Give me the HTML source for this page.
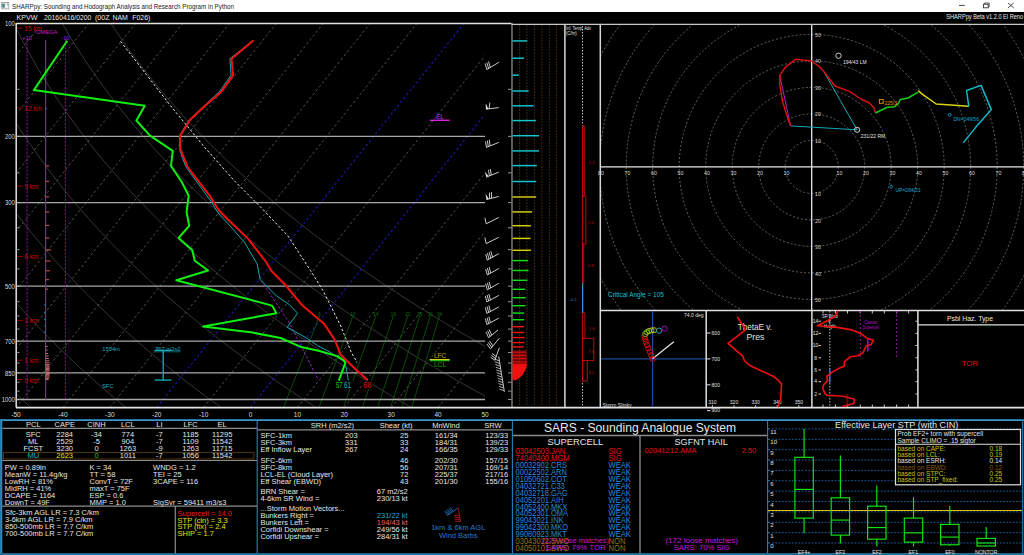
<!DOCTYPE html>
<html><head><meta charset="utf-8"><style>
html,body{margin:0;padding:0;background:#000;width:1024px;height:555px;overflow:hidden}
svg{display:block}
text{font-family:"Liberation Sans",sans-serif;white-space:pre}
</style></head><body>
<svg width="1024" height="555" viewBox="0 0 1024 555">
<rect x="0" y="0" width="1024" height="555" fill="#000"/>
<rect x="0.00" y="0.00" width="1024.00" height="12.00" fill="#ffffff"/>
<rect x="1.60" y="2.40" width="7.20" height="6.40" fill="#f4f4f4" stroke="#a8a8a8" stroke-width="0.9"/>
<line x1="1.60" y1="2.70" x2="8.80" y2="2.70" stroke="#a0a0a0" stroke-width="1.0"/>
<rect x="2.20" y="3.80" width="2.60" height="3.80" fill="#3a8a7a"/>
<rect x="7.00" y="3.80" width="1.20" height="1.50" fill="#80a8c8"/>
<text x="12.1" y="8.91" font-size="7.6" fill="#222" text-anchor="start" textLength="222.0" lengthAdjust="spacingAndGlyphs">SHARPpy: Sounding and Hodograph Analysis and Research Program in Python</text>
<line x1="959.00" y1="5.40" x2="964.80" y2="5.40" stroke="#333" stroke-width="0.9"/>
<rect x="983.40" y="4.20" width="4.80" height="3.60" fill="none" stroke="#333" stroke-width="0.9"/>
<line x1="984.60" y1="4.20" x2="984.60" y2="3.00" stroke="#333" stroke-width="0.8"/>
<line x1="984.60" y1="3.00" x2="989.20" y2="3.00" stroke="#333" stroke-width="0.8"/>
<line x1="989.20" y1="3.00" x2="989.20" y2="6.60" stroke="#333" stroke-width="0.8"/>
<line x1="989.20" y1="6.60" x2="988.20" y2="6.60" stroke="#333" stroke-width="0.8"/>
<line x1="1008.00" y1="3.00" x2="1013.60" y2="7.80" stroke="#333" stroke-width="0.9"/>
<line x1="1013.60" y1="3.00" x2="1008.00" y2="7.80" stroke="#333" stroke-width="0.9"/>
<text x="16.6" y="20.28" font-size="7.5" fill="#e8e8e8" text-anchor="start" textLength="20.9" lengthAdjust="spacingAndGlyphs">KPVW</text>
<text x="44.0" y="20.28" font-size="7.5" fill="#e8e8e8" text-anchor="start" textLength="47.3" lengthAdjust="spacingAndGlyphs">20160416/0200</text>
<text x="95.0" y="20.28" font-size="7.5" fill="#e8e8e8" text-anchor="start" textLength="14.6" lengthAdjust="spacingAndGlyphs">(00Z</text>
<text x="112.5" y="20.28" font-size="7.5" fill="#e8e8e8" text-anchor="start" textLength="15.4" lengthAdjust="spacingAndGlyphs">NAM</text>
<text x="132.3" y="20.28" font-size="7.5" fill="#e8e8e8" text-anchor="start" textLength="18.0" lengthAdjust="spacingAndGlyphs">F026)</text>
<text x="946.3" y="18.64" font-size="6.8" fill="#e8e8e8" text-anchor="start" textLength="76.8" lengthAdjust="spacingAndGlyphs">SHARPpy Beta v1.2.0 El Reno</text>
<defs><clipPath id="skc"><rect x="16.5" y="23.8" width="468.5" height="383.2"/></clipPath></defs>
<g clip-path="url(#skc)">
<polyline points="30.7,407.5 29.1,405.9 27.4,404.3 25.7,402.7 24.1,401.1 22.4,399.5 20.7,397.9 19.0,396.2 17.3,394.5 15.6,392.8 13.9,391.1 12.2,389.4 10.4,387.6 8.7,385.9 6.9,384.1 5.1,382.3 3.4,380.4 1.6,378.6 -0.2,376.7 -2.0,374.8 -3.8,372.9 -5.7,371.0 -7.5,369.0 -9.3,367.1 -11.2,365.0 -13.1,363.0 -14.9,361.0 -16.8,358.9 -18.7,356.8 -20.6,354.6 -22.5,352.5 -24.5,350.3 -26.4,348.0 -28.4,345.8 -30.4,343.5 -32.3,341.2 -34.3,338.8 -36.3,336.4 -38.4,334.0 -40.4,331.6 -42.4,329.1 -44.5,326.5 -46.6,324.0 -48.7,321.3 -50.8,318.7 -52.9,316.0 -55.0,313.2 -57.2,310.4 -59.3,307.6 -61.5,304.7 -63.7,301.7 -65.9,298.7 -68.2,295.7 -70.4,292.6 -72.7,289.4 -75.0,286.2 -77.3,282.9 -79.6,279.5 -81.9,276.0 -84.3,272.5 -86.6,268.9 -89.0,265.3 -91.4,261.5 -93.9,257.7 -96.3,253.7 -98.8,249.7 -101.3,245.5 -103.8,241.3 -106.3,236.9 -108.9,232.4 -111.5,227.8 -114.1,223.1 -116.7,218.2 -119.4,213.2 -122.0,208.0 -124.7,202.6 -127.4,197.1 -130.2,191.4 -132.9,185.4 -135.7,179.2 -138.5,172.8 -141.4,166.1 -144.2,159.2 -147.1,151.9 -150.0,144.3 -152.8,136.3 -155.8,128.0 -158.7,119.1 -161.6,109.8 -164.5,99.9 -167.4,89.3 -170.2,78.0 -173.0,65.9 -175.8,52.8 -178.4,38.6 -180.9,23.0" fill="none" stroke="#444444" stroke-width="0.8" stroke-linejoin="round"/>
<polyline points="125.8,407.5 123.9,405.9 122.0,404.3 120.1,402.7 118.1,401.1 116.2,399.5 114.2,397.9 112.3,396.2 110.3,394.5 108.3,392.8 106.3,391.1 104.3,389.4 102.3,387.6 100.3,385.9 98.2,384.1 96.2,382.3 94.1,380.4 92.0,378.6 89.9,376.7 87.8,374.8 85.7,372.9 83.6,371.0 81.5,369.0 79.3,367.1 77.1,365.0 75.0,363.0 72.8,361.0 70.6,358.9 68.3,356.8 66.1,354.6 63.8,352.5 61.6,350.3 59.3,348.0 57.0,345.8 54.7,343.5 52.4,341.2 50.0,338.8 47.7,336.4 45.3,334.0 42.9,331.6 40.5,329.1 38.1,326.5 35.6,324.0 33.1,321.3 30.7,318.7 28.2,316.0 25.6,313.2 23.1,310.4 20.5,307.6 17.9,304.7 15.3,301.7 12.7,298.7 10.1,295.7 7.4,292.6 4.7,289.4 2.0,286.2 -0.8,282.9 -3.5,279.5 -6.3,276.0 -9.1,272.5 -12.0,268.9 -14.8,265.3 -17.7,261.5 -20.7,257.7 -23.6,253.7 -26.6,249.7 -29.6,245.5 -32.7,241.3 -35.7,236.9 -38.8,232.4 -42.0,227.8 -45.2,223.1 -48.4,218.2 -51.6,213.2 -54.9,208.0 -58.2,202.6 -61.6,197.1 -65.0,191.4 -68.4,185.4 -71.9,179.2 -75.4,172.8 -79.0,166.1 -82.6,159.2 -86.2,151.9 -89.9,144.3 -93.6,136.3 -97.4,128.0 -101.2,119.1 -105.0,109.8 -108.9,99.9 -112.8,89.3 -116.7,78.0 -120.7,65.9 -124.6,52.8 -128.5,38.6 -132.3,23.0" fill="none" stroke="#444444" stroke-width="0.8" stroke-linejoin="round"/>
<polyline points="220.9,407.5 218.8,405.9 216.6,404.3 214.4,402.7 212.2,401.1 210.0,399.5 207.8,397.9 205.5,396.2 203.3,394.5 201.0,392.8 198.8,391.1 196.5,389.4 194.2,387.6 191.9,385.9 189.5,384.1 187.2,382.3 184.8,380.4 182.5,378.6 180.1,376.7 177.7,374.8 175.3,372.9 172.8,371.0 170.4,369.0 167.9,367.1 165.5,365.0 163.0,363.0 160.5,361.0 157.9,358.9 155.4,356.8 152.8,354.6 150.2,352.5 147.7,350.3 145.0,348.0 142.4,345.8 139.8,343.5 137.1,341.2 134.4,338.8 131.7,336.4 129.0,334.0 126.2,331.6 123.4,329.1 120.6,326.5 117.8,324.0 115.0,321.3 112.1,318.7 109.2,316.0 106.3,313.2 103.4,310.4 100.4,307.6 97.4,304.7 94.4,301.7 91.4,298.7 88.3,295.7 85.2,292.6 82.1,289.4 78.9,286.2 75.8,282.9 72.5,279.5 69.3,276.0 66.0,272.5 62.7,268.9 59.3,265.3 56.0,261.5 52.5,257.7 49.1,253.7 45.6,249.7 42.1,245.5 38.5,241.3 34.9,236.9 31.2,232.4 27.5,227.8 23.8,223.1 20.0,218.2 16.1,213.2 12.2,208.0 8.3,202.6 4.3,197.1 0.2,191.4 -3.9,185.4 -8.1,179.2 -12.3,172.8 -16.6,166.1 -20.9,159.2 -25.4,151.9 -29.8,144.3 -34.4,136.3 -39.0,128.0 -43.7,119.1 -48.5,109.8 -53.3,99.9 -58.3,89.3 -63.2,78.0 -68.3,65.9 -73.4,52.8 -78.6,38.6 -83.7,23.0" fill="none" stroke="#444444" stroke-width="0.8" stroke-linejoin="round"/>
<polyline points="316.1,407.5 313.6,405.9 311.2,404.3 308.7,402.7 306.3,401.1 303.8,399.5 301.3,397.9 298.8,396.2 296.3,394.5 293.7,392.8 291.2,391.1 288.6,389.4 286.0,387.6 283.4,385.9 280.8,384.1 278.2,382.3 275.6,380.4 272.9,378.6 270.2,376.7 267.5,374.8 264.8,372.9 262.1,371.0 259.3,369.0 256.6,367.1 253.8,365.0 251.0,363.0 248.1,361.0 245.3,358.9 242.4,356.8 239.6,354.6 236.6,352.5 233.7,350.3 230.8,348.0 227.8,345.8 224.8,343.5 221.8,341.2 218.8,338.8 215.7,336.4 212.6,334.0 209.5,331.6 206.4,329.1 203.2,326.5 200.0,324.0 196.8,321.3 193.6,318.7 190.3,316.0 187.0,313.2 183.7,310.4 180.3,307.6 176.9,304.7 173.5,301.7 170.0,298.7 166.5,295.7 163.0,292.6 159.5,289.4 155.9,286.2 152.3,282.9 148.6,279.5 144.9,276.0 141.1,272.5 137.4,268.9 133.5,265.3 129.7,261.5 125.8,257.7 121.8,253.7 117.8,249.7 113.7,245.5 109.6,241.3 105.5,236.9 101.3,232.4 97.0,227.8 92.7,223.1 88.3,218.2 83.8,213.2 79.3,208.0 74.8,202.6 70.1,197.1 65.4,191.4 60.6,185.4 55.8,179.2 50.8,172.8 45.8,166.1 40.7,159.2 35.5,151.9 30.2,144.3 24.8,136.3 19.3,128.0 13.7,119.1 8.0,109.8 2.2,99.9 -3.7,89.3 -9.8,78.0 -15.9,65.9 -22.2,52.8 -28.6,38.6 -35.1,23.0" fill="none" stroke="#444444" stroke-width="0.8" stroke-linejoin="round"/>
<polyline points="411.2,407.5 408.5,405.9 405.8,404.3 403.1,402.7 400.3,401.1 397.6,399.5 394.8,397.9 392.1,396.2 389.3,394.5 386.5,392.8 383.6,391.1 380.8,389.4 377.9,387.6 375.0,385.9 372.1,384.1 369.2,382.3 366.3,380.4 363.3,378.6 360.4,376.7 357.4,374.8 354.4,372.9 351.3,371.0 348.3,369.0 345.2,367.1 342.1,365.0 339.0,363.0 335.8,361.0 332.7,358.9 329.5,356.8 326.3,354.6 323.0,352.5 319.8,350.3 316.5,348.0 313.2,345.8 309.9,343.5 306.5,341.2 303.1,338.8 299.7,336.4 296.3,334.0 292.8,331.6 289.3,329.1 285.8,326.5 282.2,324.0 278.6,321.3 275.0,318.7 271.3,316.0 267.7,313.2 263.9,310.4 260.2,307.6 256.4,304.7 252.6,301.7 248.7,298.7 244.8,295.7 240.8,292.6 236.9,289.4 232.8,286.2 228.8,282.9 224.6,279.5 220.5,276.0 216.3,272.5 212.0,268.9 207.7,265.3 203.4,261.5 199.0,257.7 194.5,253.7 190.0,249.7 185.4,245.5 180.8,241.3 176.1,236.9 171.3,232.4 166.5,227.8 161.6,223.1 156.6,218.2 151.6,213.2 146.5,208.0 141.3,202.6 136.0,197.1 130.6,191.4 125.2,185.4 119.6,179.2 114.0,172.8 108.2,166.1 102.3,159.2 96.4,151.9 90.3,144.3 84.0,136.3 77.7,128.0 71.2,119.1 64.6,109.8 57.8,99.9 50.8,89.3 43.7,78.0 36.4,65.9 29.0,52.8 21.3,38.6 13.4,23.0" fill="none" stroke="#444444" stroke-width="0.8" stroke-linejoin="round"/>
<polyline points="506.3,407.5 503.3,405.9 500.4,404.3 497.4,402.7 494.4,401.1 491.4,399.5 488.4,397.9 485.3,396.2 482.3,394.5 479.2,392.8 476.1,391.1 472.9,389.4 469.8,387.6 466.6,385.9 463.4,384.1 460.2,382.3 457.0,380.4 453.8,378.6 450.5,376.7 447.2,374.8 443.9,372.9 440.6,371.0 437.2,369.0 433.8,367.1 430.4,365.0 427.0,363.0 423.5,361.0 420.0,358.9 416.5,356.8 413.0,354.6 409.4,352.5 405.9,350.3 402.2,348.0 398.6,345.8 394.9,343.5 391.2,341.2 387.5,338.8 383.7,336.4 379.9,334.0 376.1,331.6 372.2,329.1 368.3,326.5 364.4,324.0 360.4,321.3 356.4,318.7 352.4,316.0 348.3,313.2 344.2,310.4 340.1,307.6 335.9,304.7 331.6,301.7 327.4,298.7 323.0,295.7 318.7,292.6 314.2,289.4 309.8,286.2 305.3,282.9 300.7,279.5 296.1,276.0 291.4,272.5 286.7,268.9 281.9,265.3 277.1,261.5 272.2,257.7 267.2,253.7 262.2,249.7 257.1,245.5 251.9,241.3 246.7,236.9 241.4,232.4 236.0,227.8 230.5,223.1 225.0,218.2 219.3,213.2 213.6,208.0 207.8,202.6 201.8,197.1 195.8,191.4 189.7,185.4 183.4,179.2 177.1,172.8 170.6,166.1 164.0,159.2 157.2,151.9 150.3,144.3 143.3,136.3 136.1,128.0 128.7,119.1 121.1,109.8 113.4,99.9 105.4,89.3 97.2,78.0 88.8,65.9 80.1,52.8 71.2,38.6 62.0,23.0" fill="none" stroke="#444444" stroke-width="0.8" stroke-linejoin="round"/>
<polyline points="601.4,407.5 598.2,405.9 595.0,404.3 591.7,402.7 588.5,401.1 585.2,399.5 581.9,397.9 578.6,396.2 575.2,394.5 571.9,392.8 568.5,391.1 565.1,389.4 561.7,387.6 558.2,385.9 554.8,384.1 551.3,382.3 547.7,380.4 544.2,378.6 540.6,376.7 537.1,374.8 533.4,372.9 529.8,371.0 526.1,369.0 522.4,367.1 518.7,365.0 515.0,363.0 511.2,361.0 507.4,358.9 503.6,356.8 499.7,354.6 495.8,352.5 491.9,350.3 488.0,348.0 484.0,345.8 480.0,343.5 475.9,341.2 471.9,338.8 467.7,336.4 463.6,334.0 459.4,331.6 455.2,329.1 450.9,326.5 446.6,324.0 442.3,321.3 437.9,318.7 433.5,316.0 429.0,313.2 424.5,310.4 419.9,307.6 415.3,304.7 410.7,301.7 406.0,298.7 401.3,295.7 396.5,292.6 391.6,289.4 386.7,286.2 381.8,282.9 376.8,279.5 371.7,276.0 366.6,272.5 361.4,268.9 356.1,265.3 350.8,261.5 345.4,257.7 339.9,253.7 334.4,249.7 328.8,245.5 323.1,241.3 317.3,236.9 311.4,232.4 305.5,227.8 299.4,223.1 293.3,218.2 287.1,213.2 280.7,208.0 274.3,202.6 267.7,197.1 261.0,191.4 254.2,185.4 247.3,179.2 240.2,172.8 233.0,166.1 225.6,159.2 218.1,151.9 210.4,144.3 202.5,136.3 194.4,128.0 186.1,119.1 177.7,109.8 168.9,99.9 159.9,89.3 150.7,78.0 141.2,65.9 131.3,52.8 121.1,38.6 110.6,23.0" fill="none" stroke="#444444" stroke-width="0.8" stroke-linejoin="round"/>
<line x1="-499.90" y1="407.50" x2="-192.54" y2="23.30" stroke="#5a5a5a" stroke-width="0.9" stroke-dasharray="2.5,2.5"/>
<line x1="-453.00" y1="407.50" x2="-145.64" y2="23.30" stroke="#5a5a5a" stroke-width="0.9" stroke-dasharray="2.5,2.5"/>
<line x1="-406.10" y1="407.50" x2="-98.74" y2="23.30" stroke="#5a5a5a" stroke-width="0.9" stroke-dasharray="2.5,2.5"/>
<line x1="-359.20" y1="407.50" x2="-51.84" y2="23.30" stroke="#5a5a5a" stroke-width="0.9" stroke-dasharray="2.5,2.5"/>
<line x1="-312.30" y1="407.50" x2="-4.94" y2="23.30" stroke="#5a5a5a" stroke-width="0.9" stroke-dasharray="2.5,2.5"/>
<line x1="-265.40" y1="407.50" x2="41.96" y2="23.30" stroke="#5a5a5a" stroke-width="0.9" stroke-dasharray="2.5,2.5"/>
<line x1="-218.50" y1="407.50" x2="88.86" y2="23.30" stroke="#5a5a5a" stroke-width="0.9" stroke-dasharray="2.5,2.5"/>
<line x1="-171.60" y1="407.50" x2="135.76" y2="23.30" stroke="#5a5a5a" stroke-width="0.9" stroke-dasharray="2.5,2.5"/>
<line x1="-124.70" y1="407.50" x2="182.66" y2="23.30" stroke="#5a5a5a" stroke-width="0.9" stroke-dasharray="2.5,2.5"/>
<line x1="-77.80" y1="407.50" x2="229.56" y2="23.30" stroke="#5a5a5a" stroke-width="0.9" stroke-dasharray="2.5,2.5"/>
<line x1="-30.90" y1="407.50" x2="276.46" y2="23.30" stroke="#5a5a5a" stroke-width="0.9" stroke-dasharray="2.5,2.5"/>
<line x1="16.00" y1="407.50" x2="323.36" y2="23.30" stroke="#5a5a5a" stroke-width="0.9" stroke-dasharray="2.5,2.5"/>
<line x1="62.90" y1="407.50" x2="370.26" y2="23.30" stroke="#5a5a5a" stroke-width="0.9" stroke-dasharray="2.5,2.5"/>
<line x1="109.80" y1="407.50" x2="417.16" y2="23.30" stroke="#5a5a5a" stroke-width="0.9" stroke-dasharray="2.5,2.5"/>
<line x1="156.70" y1="407.50" x2="464.06" y2="23.30" stroke="#1818a8" stroke-width="1.15" stroke-dasharray="2.5,2.5"/>
<line x1="203.60" y1="407.50" x2="510.96" y2="23.30" stroke="#5a5a5a" stroke-width="0.9" stroke-dasharray="2.5,2.5"/>
<line x1="250.50" y1="407.50" x2="557.86" y2="23.30" stroke="#1818a8" stroke-width="1.15" stroke-dasharray="2.5,2.5"/>
<line x1="297.40" y1="407.50" x2="604.76" y2="23.30" stroke="#5a5a5a" stroke-width="0.9" stroke-dasharray="2.5,2.5"/>
<line x1="344.30" y1="407.50" x2="651.66" y2="23.30" stroke="#5a5a5a" stroke-width="0.9" stroke-dasharray="2.5,2.5"/>
<line x1="391.20" y1="407.50" x2="698.56" y2="23.30" stroke="#5a5a5a" stroke-width="0.9" stroke-dasharray="2.5,2.5"/>
<line x1="438.10" y1="407.50" x2="745.46" y2="23.30" stroke="#5a5a5a" stroke-width="0.9" stroke-dasharray="2.5,2.5"/>
<line x1="485.00" y1="407.50" x2="792.36" y2="23.30" stroke="#5a5a5a" stroke-width="0.9" stroke-dasharray="2.5,2.5"/>
<line x1="319.59" y1="315.97" x2="283.47" y2="407.48" stroke="#0a600a" stroke-width="0.8"/>
<text x="319.6" y="315.78" font-size="4.6" fill="#0a720a" text-anchor="middle">6</text>
<line x1="352.91" y1="315.97" x2="319.02" y2="407.48" stroke="#0a600a" stroke-width="0.8"/>
<text x="352.9" y="315.78" font-size="4.6" fill="#0a720a" text-anchor="middle">10</text>
<line x1="375.79" y1="315.97" x2="343.48" y2="407.48" stroke="#0a600a" stroke-width="0.8"/>
<text x="375.8" y="315.78" font-size="4.6" fill="#0a720a" text-anchor="middle">14</text>
<line x1="393.36" y1="315.97" x2="362.29" y2="407.48" stroke="#0a600a" stroke-width="0.8"/>
<text x="393.4" y="315.78" font-size="4.6" fill="#0a720a" text-anchor="middle">18</text>
<line x1="407.67" y1="315.97" x2="377.62" y2="407.48" stroke="#0a600a" stroke-width="0.8"/>
<text x="407.7" y="315.78" font-size="4.6" fill="#0a720a" text-anchor="middle">22</text>
<line x1="419.77" y1="315.97" x2="390.59" y2="407.48" stroke="#0a600a" stroke-width="0.8"/>
<text x="419.8" y="315.78" font-size="4.6" fill="#0a720a" text-anchor="middle">26</text>
<line x1="430.26" y1="315.97" x2="401.84" y2="407.48" stroke="#0a600a" stroke-width="0.8"/>
<text x="430.3" y="315.78" font-size="4.6" fill="#0a720a" text-anchor="middle">30</text>
<line x1="439.53" y1="315.97" x2="411.79" y2="407.48" stroke="#0a600a" stroke-width="0.8"/>
<text x="439.5" y="315.78" font-size="4.6" fill="#0a720a" text-anchor="middle">34</text>
<line x1="16.00" y1="136.34" x2="485.00" y2="136.34" stroke="#a8a8a8" stroke-width="1.3"/>
<line x1="16.00" y1="202.64" x2="485.00" y2="202.64" stroke="#a8a8a8" stroke-width="1.3"/>
<line x1="16.00" y1="286.16" x2="485.00" y2="286.16" stroke="#a8a8a8" stroke-width="1.3"/>
<line x1="16.00" y1="341.18" x2="485.00" y2="341.18" stroke="#a8a8a8" stroke-width="1.3"/>
<line x1="16.00" y1="372.93" x2="485.00" y2="372.93" stroke="#a8a8a8" stroke-width="1.3"/>
<line x1="16.00" y1="399.50" x2="485.00" y2="399.50" stroke="#a8a8a8" stroke-width="1.3"/>
</g>
<line x1="16.20" y1="23.50" x2="511.50" y2="23.50" stroke="#e4e4e4" stroke-width="1.5"/>
<line x1="16.20" y1="23.00" x2="16.20" y2="407.50" stroke="#e4e4e4" stroke-width="1.5"/>
<line x1="16.00" y1="89.30" x2="19.50" y2="89.30" stroke="#bbb" stroke-width="0.8"/>
<line x1="508.00" y1="89.30" x2="511.50" y2="89.30" stroke="#bbb" stroke-width="0.8"/>
<line x1="16.00" y1="136.34" x2="19.50" y2="136.34" stroke="#bbb" stroke-width="0.8"/>
<line x1="508.00" y1="136.34" x2="511.50" y2="136.34" stroke="#bbb" stroke-width="0.8"/>
<line x1="16.00" y1="172.82" x2="19.50" y2="172.82" stroke="#bbb" stroke-width="0.8"/>
<line x1="508.00" y1="172.82" x2="511.50" y2="172.82" stroke="#bbb" stroke-width="0.8"/>
<line x1="16.00" y1="202.64" x2="19.50" y2="202.64" stroke="#bbb" stroke-width="0.8"/>
<line x1="508.00" y1="202.64" x2="511.50" y2="202.64" stroke="#bbb" stroke-width="0.8"/>
<line x1="16.00" y1="227.84" x2="19.50" y2="227.84" stroke="#bbb" stroke-width="0.8"/>
<line x1="508.00" y1="227.84" x2="511.50" y2="227.84" stroke="#bbb" stroke-width="0.8"/>
<line x1="16.00" y1="249.68" x2="19.50" y2="249.68" stroke="#bbb" stroke-width="0.8"/>
<line x1="508.00" y1="249.68" x2="511.50" y2="249.68" stroke="#bbb" stroke-width="0.8"/>
<line x1="16.00" y1="268.93" x2="19.50" y2="268.93" stroke="#bbb" stroke-width="0.8"/>
<line x1="508.00" y1="268.93" x2="511.50" y2="268.93" stroke="#bbb" stroke-width="0.8"/>
<line x1="16.00" y1="286.16" x2="19.50" y2="286.16" stroke="#bbb" stroke-width="0.8"/>
<line x1="508.00" y1="286.16" x2="511.50" y2="286.16" stroke="#bbb" stroke-width="0.8"/>
<line x1="16.00" y1="301.75" x2="19.50" y2="301.75" stroke="#bbb" stroke-width="0.8"/>
<line x1="508.00" y1="301.75" x2="511.50" y2="301.75" stroke="#bbb" stroke-width="0.8"/>
<line x1="16.00" y1="315.97" x2="19.50" y2="315.97" stroke="#bbb" stroke-width="0.8"/>
<line x1="508.00" y1="315.97" x2="511.50" y2="315.97" stroke="#bbb" stroke-width="0.8"/>
<line x1="16.00" y1="329.06" x2="19.50" y2="329.06" stroke="#bbb" stroke-width="0.8"/>
<line x1="508.00" y1="329.06" x2="511.50" y2="329.06" stroke="#bbb" stroke-width="0.8"/>
<line x1="16.00" y1="341.18" x2="19.50" y2="341.18" stroke="#bbb" stroke-width="0.8"/>
<line x1="508.00" y1="341.18" x2="511.50" y2="341.18" stroke="#bbb" stroke-width="0.8"/>
<line x1="16.00" y1="352.46" x2="19.50" y2="352.46" stroke="#bbb" stroke-width="0.8"/>
<line x1="508.00" y1="352.46" x2="511.50" y2="352.46" stroke="#bbb" stroke-width="0.8"/>
<line x1="16.00" y1="363.01" x2="19.50" y2="363.01" stroke="#bbb" stroke-width="0.8"/>
<line x1="508.00" y1="363.01" x2="511.50" y2="363.01" stroke="#bbb" stroke-width="0.8"/>
<line x1="16.00" y1="372.93" x2="19.50" y2="372.93" stroke="#bbb" stroke-width="0.8"/>
<line x1="508.00" y1="372.93" x2="511.50" y2="372.93" stroke="#bbb" stroke-width="0.8"/>
<line x1="16.00" y1="382.27" x2="19.50" y2="382.27" stroke="#bbb" stroke-width="0.8"/>
<line x1="508.00" y1="382.27" x2="511.50" y2="382.27" stroke="#bbb" stroke-width="0.8"/>
<line x1="16.00" y1="391.11" x2="19.50" y2="391.11" stroke="#bbb" stroke-width="0.8"/>
<line x1="508.00" y1="391.11" x2="511.50" y2="391.11" stroke="#bbb" stroke-width="0.8"/>
<line x1="16.00" y1="399.50" x2="19.50" y2="399.50" stroke="#bbb" stroke-width="0.8"/>
<line x1="508.00" y1="399.50" x2="511.50" y2="399.50" stroke="#bbb" stroke-width="0.8"/>
<text x="14.9" y="25.71" font-size="7.0" fill="#dcdcdc" text-anchor="end" textLength="9.9" lengthAdjust="spacingAndGlyphs">100</text>
<text x="14.9" y="139.05" font-size="7.0" fill="#dcdcdc" text-anchor="end" textLength="9.9" lengthAdjust="spacingAndGlyphs">200</text>
<text x="14.9" y="205.34" font-size="7.0" fill="#dcdcdc" text-anchor="end" textLength="9.9" lengthAdjust="spacingAndGlyphs">300</text>
<text x="14.9" y="288.87" font-size="7.0" fill="#dcdcdc" text-anchor="end" textLength="9.9" lengthAdjust="spacingAndGlyphs">500</text>
<text x="14.9" y="343.89" font-size="7.0" fill="#dcdcdc" text-anchor="end" textLength="9.9" lengthAdjust="spacingAndGlyphs">700</text>
<text x="14.9" y="375.63" font-size="7.0" fill="#dcdcdc" text-anchor="end" textLength="9.9" lengthAdjust="spacingAndGlyphs">850</text>
<text x="14.9" y="402.21" font-size="7.0" fill="#dcdcdc" text-anchor="end" textLength="13.2" lengthAdjust="spacingAndGlyphs">1000</text>
<text x="16.0" y="416.77" font-size="6.6" fill="#dcdcdc" text-anchor="middle" textLength="9.4" lengthAdjust="spacingAndGlyphs">-50</text>
<text x="62.9" y="416.77" font-size="6.6" fill="#dcdcdc" text-anchor="middle" textLength="9.4" lengthAdjust="spacingAndGlyphs">-40</text>
<text x="109.8" y="416.77" font-size="6.6" fill="#dcdcdc" text-anchor="middle" textLength="9.4" lengthAdjust="spacingAndGlyphs">-30</text>
<text x="156.7" y="416.77" font-size="6.6" fill="#dcdcdc" text-anchor="middle" textLength="9.4" lengthAdjust="spacingAndGlyphs">-20</text>
<text x="203.6" y="416.77" font-size="6.6" fill="#dcdcdc" text-anchor="middle" textLength="9.4" lengthAdjust="spacingAndGlyphs">-10</text>
<text x="250.5" y="416.77" font-size="6.6" fill="#dcdcdc" text-anchor="middle" textLength="3.6" lengthAdjust="spacingAndGlyphs">0</text>
<text x="297.4" y="416.77" font-size="6.6" fill="#dcdcdc" text-anchor="middle" textLength="7.2" lengthAdjust="spacingAndGlyphs">10</text>
<text x="344.3" y="416.77" font-size="6.6" fill="#dcdcdc" text-anchor="middle" textLength="7.2" lengthAdjust="spacingAndGlyphs">20</text>
<text x="391.2" y="416.77" font-size="6.6" fill="#dcdcdc" text-anchor="middle" textLength="7.2" lengthAdjust="spacingAndGlyphs">30</text>
<text x="438.1" y="416.77" font-size="6.6" fill="#dcdcdc" text-anchor="middle" textLength="7.2" lengthAdjust="spacingAndGlyphs">40</text>
<text x="485.0" y="416.77" font-size="6.6" fill="#dcdcdc" text-anchor="middle" textLength="7.2" lengthAdjust="spacingAndGlyphs">50</text>
<line x1="17.00" y1="28.20" x2="22.50" y2="28.20" stroke="#c00000" stroke-width="0.8"/>
<text x="24.3" y="31.27" font-size="6.6" fill="#d00000" text-anchor="start">15 km</text>
<line x1="17.00" y1="108.00" x2="22.50" y2="108.00" stroke="#c00000" stroke-width="0.8"/>
<text x="24.3" y="111.07" font-size="6.6" fill="#d00000" text-anchor="start">12 km</text>
<line x1="17.00" y1="186.10" x2="22.50" y2="186.10" stroke="#c00000" stroke-width="0.8"/>
<text x="24.3" y="189.17" font-size="6.6" fill="#d00000" text-anchor="start">9 km</text>
<line x1="17.00" y1="256.40" x2="22.50" y2="256.40" stroke="#c00000" stroke-width="0.8"/>
<text x="24.3" y="259.47" font-size="6.6" fill="#d00000" text-anchor="start">6 km</text>
<line x1="17.00" y1="320.40" x2="22.50" y2="320.40" stroke="#c00000" stroke-width="0.8"/>
<text x="24.3" y="323.47" font-size="6.6" fill="#d00000" text-anchor="start">3 km</text>
<line x1="17.00" y1="360.20" x2="22.50" y2="360.20" stroke="#c00000" stroke-width="0.8"/>
<text x="24.3" y="363.27" font-size="6.6" fill="#d00000" text-anchor="start">1 km</text>
<line x1="17.00" y1="379.50" x2="22.50" y2="379.50" stroke="#c00000" stroke-width="0.8"/>
<text x="24.3" y="382.57" font-size="6.6" fill="#d00000" text-anchor="start">0 km</text>
<line x1="45.60" y1="40.00" x2="45.60" y2="399.50" stroke="#9a14b8" stroke-width="1.2"/>
<line x1="27.10" y1="40.00" x2="27.10" y2="399.50" stroke="#9a10b8" stroke-width="0.9" stroke-dasharray="2.2,1.4"/>
<line x1="65.40" y1="40.00" x2="65.40" y2="399.50" stroke="#9a10b8" stroke-width="0.9" stroke-dasharray="2.2,1.4"/>
<text x="27.0" y="39.80" font-size="5.8" fill="#c818c8" text-anchor="middle">+10</text>
<text x="65.4" y="39.80" font-size="5.8" fill="#c818c8" text-anchor="middle">-10</text>
<text x="46.6" y="34.40" font-size="5.8" fill="#c818c8" text-anchor="middle">OMEGA</text>
<line x1="45.60" y1="165.90" x2="49.20" y2="165.90" stroke="#e05050" stroke-width="1.0"/>
<line x1="45.60" y1="181.30" x2="49.20" y2="181.30" stroke="#e05050" stroke-width="1.0"/>
<line x1="45.60" y1="196.90" x2="49.20" y2="196.90" stroke="#e05050" stroke-width="1.0"/>
<line x1="45.60" y1="212.00" x2="49.20" y2="212.00" stroke="#e05050" stroke-width="1.0"/>
<line x1="45.60" y1="225.40" x2="49.20" y2="225.40" stroke="#e05050" stroke-width="1.0"/>
<line x1="45.60" y1="238.00" x2="49.20" y2="238.00" stroke="#e05050" stroke-width="1.0"/>
<line x1="45.60" y1="249.90" x2="51.10" y2="249.90" stroke="#e05050" stroke-width="1.0"/>
<line x1="45.60" y1="261.00" x2="50.60" y2="261.00" stroke="#e05050" stroke-width="1.0"/>
<line x1="45.60" y1="270.80" x2="50.10" y2="270.80" stroke="#e05050" stroke-width="1.0"/>
<line x1="45.60" y1="279.70" x2="49.10" y2="279.70" stroke="#e05050" stroke-width="1.0"/>
<line x1="45.60" y1="289.20" x2="48.10" y2="289.20" stroke="#e05050" stroke-width="1.0"/>
<line x1="45.60" y1="108.50" x2="47.00" y2="108.50" stroke="#2060e0" stroke-width="1.0"/>
<line x1="44.20" y1="304.90" x2="45.60" y2="304.90" stroke="#2a70e0" stroke-width="1.2"/>
<line x1="44.20" y1="312.40" x2="45.60" y2="312.40" stroke="#2a70e0" stroke-width="1.2"/>
<line x1="44.20" y1="319.70" x2="45.60" y2="319.70" stroke="#2a70e0" stroke-width="1.2"/>
<line x1="44.20" y1="326.00" x2="45.60" y2="326.00" stroke="#2a70e0" stroke-width="1.2"/>
<line x1="44.20" y1="332.20" x2="45.60" y2="332.20" stroke="#2a70e0" stroke-width="1.2"/>
<line x1="45.60" y1="346.50" x2="47.60" y2="346.50" stroke="#e07272" stroke-width="0.9"/>
<line x1="45.60" y1="350.00" x2="47.60" y2="350.00" stroke="#e07272" stroke-width="0.9"/>
<line x1="45.60" y1="353.50" x2="48.10" y2="353.50" stroke="#e07272" stroke-width="0.9"/>
<line x1="45.60" y1="356.00" x2="48.60" y2="356.00" stroke="#e07272" stroke-width="0.9"/>
<line x1="45.60" y1="358.50" x2="49.00" y2="358.50" stroke="#e07272" stroke-width="0.9"/>
<line x1="45.60" y1="360.80" x2="49.40" y2="360.80" stroke="#e07272" stroke-width="0.9"/>
<line x1="45.60" y1="362.80" x2="49.60" y2="362.80" stroke="#e07272" stroke-width="0.9"/>
<line x1="45.60" y1="364.60" x2="49.60" y2="364.60" stroke="#e07272" stroke-width="0.9"/>
<line x1="45.60" y1="365.85" x2="49.60" y2="365.85" stroke="#e07272" stroke-width="0.9"/>
<line x1="45.60" y1="367.10" x2="49.60" y2="367.10" stroke="#e07272" stroke-width="0.9"/>
<line x1="45.60" y1="368.35" x2="49.60" y2="368.35" stroke="#e07272" stroke-width="0.9"/>
<line x1="45.60" y1="369.60" x2="49.60" y2="369.60" stroke="#e07272" stroke-width="0.9"/>
<line x1="45.60" y1="370.85" x2="49.60" y2="370.85" stroke="#e07272" stroke-width="0.9"/>
<line x1="45.60" y1="372.10" x2="49.60" y2="372.10" stroke="#e07272" stroke-width="0.9"/>
<line x1="45.60" y1="373.35" x2="49.60" y2="373.35" stroke="#e07272" stroke-width="0.9"/>
<line x1="45.60" y1="374.60" x2="49.60" y2="374.60" stroke="#e07272" stroke-width="0.9"/>
<line x1="45.60" y1="375.85" x2="49.60" y2="375.85" stroke="#e07272" stroke-width="0.9"/>
<line x1="45.60" y1="377.10" x2="49.60" y2="377.10" stroke="#e07272" stroke-width="0.9"/>
<line x1="45.60" y1="378.35" x2="48.80" y2="378.35" stroke="#e07272" stroke-width="0.9"/>
<line x1="45.60" y1="379.60" x2="48.80" y2="379.60" stroke="#e07272" stroke-width="0.9"/>
<text x="111.1" y="350.60" font-size="5.8" fill="#10b0c0" text-anchor="middle">1504m</text>
<text x="167.8" y="350.60" font-size="5.8" fill="#10b0c0" text-anchor="middle" text-decoration="underline">267 m2s2</text>
<line x1="163.20" y1="350.40" x2="163.20" y2="380.10" stroke="#10b0c0" stroke-width="1.3"/>
<line x1="154.60" y1="350.40" x2="171.50" y2="350.40" stroke="#10b0c0" stroke-width="1.3"/>
<line x1="154.60" y1="380.10" x2="171.50" y2="380.10" stroke="#10b0c0" stroke-width="1.3"/>
<text x="107.8" y="387.60" font-size="5.8" fill="#10b0c0" text-anchor="middle">SFC</text>
<polyline points="120.6,41.4 170.5,105.7 204.6,147.3 234.9,181.3 261.3,207.8 288.0,236.0 310.4,270.4 323.0,290.6 331.9,308.3 340.7,326.0 345.8,338.6 350.8,351.2 357.1,362.6" fill="none" stroke="#e8e8e8" stroke-width="1.0" stroke-linejoin="round" stroke-dasharray="2.5,2"/>
<polyline points="261.3,280.8 289.4,322.9 318.5,380.2" fill="none" stroke="#9a20c0" stroke-width="1.0" stroke-linejoin="round" stroke-dasharray="2.6,1.8"/>
<polyline points="252.5,40.8 229.9,58.7 231.1,75.1 220.0,91.0 205.0,105.0 189.0,120.0 179.3,136.0 180.1,151.3 185.8,166.7 198.4,184.0 211.6,202.2 218.8,213.9 230.0,225.9 244.4,242.2 257.1,263.8 260.2,279.7 265.6,285.1 276.4,295.9 289.4,304.6 297.6,313.2 287.2,327.2 307.7,338.7 317.5,345.6 330.0,352.1 343.7,361.3 345.4,364.0 348.4,380.3" fill="none" stroke="#12a8b0" stroke-width="1.0" stroke-linejoin="round"/>
<polyline points="67.3,40.8 33.8,90.1 144.8,105.7 136.4,120.5 150.0,135.6 172.8,150.8 171.0,165.9 181.6,181.8 188.7,195.7 186.6,212.0 189.2,225.9 178.6,238.0 192.2,249.9 194.8,260.8 208.1,270.5 176.3,280.2 272.1,305.6 276.4,313.2 203.0,326.6 252.6,332.6 280.7,338.0 300.2,346.7 319.6,351.0 337.8,356.4 344.4,360.8 345.4,362.7 338.8,380.6" fill="none" stroke="#10f010" stroke-width="2.0" stroke-linejoin="round"/>
<polyline points="253.7,40.3 231.5,58.7 233.1,75.1 221.6,91.4 205.7,105.2 189.9,120.1 180.1,136.0 180.3,149.0 187.6,167.0 209.8,195.9 218.8,210.3 227.8,219.3 248.0,238.6 266.1,262.0 271.5,271.0 285.9,285.5 302.2,305.3 323.8,323.4 334.7,339.6 338.3,348.6 340.1,354.0 347.3,361.3 356.7,370.2 367.8,380.3" fill="none" stroke="#f01010" stroke-width="2.0" stroke-linejoin="round"/>
<rect x="333.50" y="381.00" width="21.50" height="8.00" fill="#000"/>
<rect x="362.50" y="381.00" width="10.00" height="8.00" fill="#000"/>
<text x="339.2" y="387.93" font-size="8.8" fill="#10d010" text-anchor="middle" textLength="6.6" lengthAdjust="spacingAndGlyphs">57</text>
<text x="347.6" y="387.93" font-size="8.8" fill="#10b8c0" text-anchor="middle" textLength="7.0" lengthAdjust="spacingAndGlyphs">61</text>
<text x="367.4" y="387.93" font-size="8.8" fill="#e81010" text-anchor="middle" textLength="7.8" lengthAdjust="spacingAndGlyphs">68</text>
<rect x="433.50" y="352.50" width="13.50" height="5.80" fill="#000"/>
<rect x="433.50" y="361.60" width="13.50" height="6.20" fill="#000"/>
<line x1="430.00" y1="359.60" x2="449.60" y2="359.60" stroke="#e8e010" stroke-width="1.1"/>
<line x1="430.00" y1="360.70" x2="449.60" y2="360.70" stroke="#20e010" stroke-width="1.1"/>
<text x="440.0" y="358.37" font-size="6.6" fill="#c8a810" text-anchor="middle" textLength="12.2" lengthAdjust="spacingAndGlyphs">LFC</text>
<text x="440.0" y="367.21" font-size="7.0" fill="#10b010" text-anchor="middle" textLength="12.2" lengthAdjust="spacingAndGlyphs">LCL</text>
<line x1="430.00" y1="120.30" x2="449.70" y2="120.30" stroke="#e020e0" stroke-width="1.4"/>
<text x="440.0" y="119.07" font-size="6.3" fill="#e020e0" text-anchor="middle">EL</text>
<line x1="498.80" y1="62.30" x2="486.90" y2="69.50" stroke="#e0e0e0" stroke-width="0.9"/>
<line x1="486.90" y1="69.50" x2="485.08" y2="63.59" stroke="#e0e0e0" stroke-width="0.9"/>
<line x1="488.61" y1="68.46" x2="486.79" y2="62.55" stroke="#e0e0e0" stroke-width="0.9"/>
<line x1="490.32" y1="67.43" x2="488.50" y2="61.52" stroke="#e0e0e0" stroke-width="0.9"/>
<line x1="498.80" y1="107.60" x2="485.90" y2="109.20" stroke="#e0e0e0" stroke-width="0.9"/>
<polygon points="485.9,109.2 485.7,103.2 488.4,108.9" fill="#e0e0e0"/>
<line x1="489.08" y1="108.81" x2="489.83" y2="102.67" stroke="#e0e0e0" stroke-width="0.9"/>
<line x1="498.80" y1="142.40" x2="486.40" y2="147.40" stroke="#e0e0e0" stroke-width="0.9"/>
<line x1="486.40" y1="147.40" x2="485.55" y2="141.27" stroke="#e0e0e0" stroke-width="0.9"/>
<line x1="488.25" y1="146.65" x2="487.40" y2="140.53" stroke="#e0e0e0" stroke-width="0.9"/>
<line x1="490.11" y1="145.90" x2="489.26" y2="139.78" stroke="#e0e0e0" stroke-width="0.9"/>
<line x1="498.80" y1="172.10" x2="486.40" y2="177.10" stroke="#e0e0e0" stroke-width="0.9"/>
<polygon points="486.4,177.1 484.6,171.5 488.7,176.2" fill="#e0e0e0"/>
<line x1="489.37" y1="175.90" x2="488.52" y2="169.78" stroke="#e0e0e0" stroke-width="0.9"/>
<line x1="491.22" y1="175.16" x2="490.37" y2="169.03" stroke="#e0e0e0" stroke-width="0.9"/>
<line x1="498.80" y1="196.50" x2="486.40" y2="199.50" stroke="#e0e0e0" stroke-width="0.9"/>
<polygon points="486.4,199.5 485.5,193.7 488.8,198.9" fill="#e0e0e0"/>
<line x1="489.51" y1="198.75" x2="489.56" y2="192.56" stroke="#e0e0e0" stroke-width="0.9"/>
<line x1="491.45" y1="198.28" x2="491.50" y2="192.09" stroke="#e0e0e0" stroke-width="0.9"/>
<line x1="498.80" y1="217.50" x2="486.20" y2="223.80" stroke="#e0e0e0" stroke-width="0.9"/>
<line x1="486.20" y1="223.80" x2="484.86" y2="217.76" stroke="#e0e0e0" stroke-width="0.9"/>
<line x1="498.80" y1="237.30" x2="486.20" y2="243.60" stroke="#e0e0e0" stroke-width="0.9"/>
<line x1="486.20" y1="243.60" x2="484.86" y2="237.56" stroke="#e0e0e0" stroke-width="0.9"/>
<line x1="498.80" y1="253.60" x2="487.30" y2="260.10" stroke="#e0e0e0" stroke-width="0.9"/>
<line x1="487.30" y1="260.10" x2="485.65" y2="254.14" stroke="#e0e0e0" stroke-width="0.9"/>
<line x1="489.04" y1="259.12" x2="487.39" y2="253.15" stroke="#e0e0e0" stroke-width="0.9"/>
<line x1="490.78" y1="258.13" x2="489.14" y2="252.17" stroke="#e0e0e0" stroke-width="0.9"/>
<line x1="492.52" y1="257.15" x2="490.88" y2="251.19" stroke="#e0e0e0" stroke-width="0.9"/>
<line x1="498.80" y1="268.50" x2="487.30" y2="275.00" stroke="#e0e0e0" stroke-width="0.9"/>
<line x1="487.30" y1="275.00" x2="485.65" y2="269.04" stroke="#e0e0e0" stroke-width="0.9"/>
<line x1="489.04" y1="274.02" x2="487.39" y2="268.05" stroke="#e0e0e0" stroke-width="0.9"/>
<line x1="490.78" y1="273.03" x2="489.14" y2="267.07" stroke="#e0e0e0" stroke-width="0.9"/>
<line x1="498.80" y1="283.30" x2="487.30" y2="289.80" stroke="#e0e0e0" stroke-width="0.9"/>
<line x1="487.30" y1="289.80" x2="485.65" y2="283.84" stroke="#e0e0e0" stroke-width="0.9"/>
<line x1="489.04" y1="288.82" x2="487.39" y2="282.85" stroke="#e0e0e0" stroke-width="0.9"/>
<line x1="490.78" y1="287.83" x2="489.14" y2="281.87" stroke="#e0e0e0" stroke-width="0.9"/>
<line x1="498.80" y1="295.40" x2="486.90" y2="301.90" stroke="#e0e0e0" stroke-width="0.9"/>
<line x1="486.90" y1="301.90" x2="485.34" y2="295.92" stroke="#e0e0e0" stroke-width="0.9"/>
<line x1="488.66" y1="300.94" x2="487.10" y2="294.96" stroke="#e0e0e0" stroke-width="0.9"/>
<line x1="490.41" y1="299.98" x2="488.85" y2="294.00" stroke="#e0e0e0" stroke-width="0.9"/>
<line x1="498.80" y1="306.90" x2="486.90" y2="313.40" stroke="#e0e0e0" stroke-width="0.9"/>
<line x1="486.90" y1="313.40" x2="485.34" y2="307.42" stroke="#e0e0e0" stroke-width="0.9"/>
<line x1="488.66" y1="312.44" x2="487.10" y2="306.46" stroke="#e0e0e0" stroke-width="0.9"/>
<line x1="490.41" y1="311.48" x2="488.85" y2="305.50" stroke="#e0e0e0" stroke-width="0.9"/>
<line x1="498.80" y1="318.10" x2="486.90" y2="324.60" stroke="#e0e0e0" stroke-width="0.9"/>
<line x1="486.90" y1="324.60" x2="485.34" y2="318.62" stroke="#e0e0e0" stroke-width="0.9"/>
<line x1="488.66" y1="323.64" x2="487.10" y2="317.66" stroke="#e0e0e0" stroke-width="0.9"/>
<line x1="490.41" y1="322.68" x2="488.85" y2="316.70" stroke="#e0e0e0" stroke-width="0.9"/>
<line x1="498.00" y1="330.00" x2="488.60" y2="337.60" stroke="#e0e0e0" stroke-width="0.9"/>
<line x1="488.60" y1="337.60" x2="485.99" y2="331.99" stroke="#e0e0e0" stroke-width="0.9"/>
<line x1="490.16" y1="336.34" x2="487.55" y2="330.73" stroke="#e0e0e0" stroke-width="0.9"/>
<line x1="491.71" y1="335.09" x2="489.10" y2="329.48" stroke="#e0e0e0" stroke-width="0.9"/>
<line x1="499.30" y1="338.20" x2="490.50" y2="348.90" stroke="#e0e0e0" stroke-width="0.9"/>
<line x1="490.50" y1="348.90" x2="486.82" y2="343.93" stroke="#e0e0e0" stroke-width="0.9"/>
<line x1="491.77" y1="347.36" x2="488.09" y2="342.39" stroke="#e0e0e0" stroke-width="0.9"/>
<line x1="493.04" y1="345.81" x2="489.36" y2="340.84" stroke="#e0e0e0" stroke-width="0.9"/>
<line x1="499.30" y1="347.70" x2="494.90" y2="360.30" stroke="#e0e0e0" stroke-width="0.9"/>
<line x1="494.90" y1="360.30" x2="490.67" y2="357.24" stroke="#e0e0e0" stroke-width="0.9"/>
<line x1="495.56" y1="358.41" x2="491.33" y2="355.35" stroke="#e0e0e0" stroke-width="0.9"/>
<line x1="496.22" y1="356.52" x2="491.99" y2="353.46" stroke="#e0e0e0" stroke-width="0.9"/>
<line x1="498.70" y1="356.50" x2="504.40" y2="391.80" stroke="#d8d8d8" stroke-width="0.9"/>
<line x1="499.14" y1="360.72" x2="494.54" y2="359.12" stroke="#d8d8d8" stroke-width="0.8"/>
<line x1="499.58" y1="363.43" x2="494.98" y2="361.83" stroke="#d8d8d8" stroke-width="0.8"/>
<line x1="500.02" y1="366.15" x2="495.42" y2="364.55" stroke="#d8d8d8" stroke-width="0.8"/>
<line x1="500.45" y1="368.86" x2="495.85" y2="367.26" stroke="#d8d8d8" stroke-width="0.8"/>
<line x1="500.89" y1="371.58" x2="496.29" y2="369.98" stroke="#d8d8d8" stroke-width="0.8"/>
<line x1="501.33" y1="374.29" x2="496.73" y2="372.69" stroke="#d8d8d8" stroke-width="0.8"/>
<line x1="501.77" y1="377.01" x2="497.17" y2="375.41" stroke="#d8d8d8" stroke-width="0.8"/>
<line x1="502.21" y1="379.72" x2="497.61" y2="378.12" stroke="#d8d8d8" stroke-width="0.8"/>
<line x1="502.65" y1="382.44" x2="498.05" y2="380.84" stroke="#d8d8d8" stroke-width="0.8"/>
<line x1="503.08" y1="385.15" x2="498.48" y2="383.55" stroke="#d8d8d8" stroke-width="0.8"/>
<line x1="503.52" y1="387.87" x2="498.92" y2="386.27" stroke="#d8d8d8" stroke-width="0.8"/>
<line x1="503.96" y1="390.58" x2="499.36" y2="388.98" stroke="#d8d8d8" stroke-width="0.8"/>
<line x1="519.60" y1="25.50" x2="519.60" y2="406.50" stroke="#7a4418" stroke-width="0.9" stroke-dasharray="1.2,1.8"/>
<line x1="526.90" y1="25.50" x2="526.90" y2="406.50" stroke="#7a4418" stroke-width="0.9" stroke-dasharray="1.2,1.8"/>
<line x1="534.40" y1="25.50" x2="534.40" y2="406.50" stroke="#7a4418" stroke-width="0.9" stroke-dasharray="1.2,1.8"/>
<line x1="541.80" y1="25.50" x2="541.80" y2="406.50" stroke="#7a4418" stroke-width="0.9" stroke-dasharray="1.2,1.8"/>
<line x1="549.30" y1="25.50" x2="549.30" y2="406.50" stroke="#7a4418" stroke-width="0.9" stroke-dasharray="1.2,1.8"/>
<line x1="556.70" y1="25.50" x2="556.70" y2="406.50" stroke="#7a4418" stroke-width="0.9" stroke-dasharray="1.2,1.8"/>
<line x1="512.00" y1="23.00" x2="512.00" y2="407.50" stroke="#989898" stroke-width="1.2"/>
<line x1="512.50" y1="40.90" x2="527.20" y2="40.90" stroke="#10c8d0" stroke-width="1.45"/>
<line x1="512.50" y1="58.20" x2="524.00" y2="58.20" stroke="#10c8d0" stroke-width="1.45"/>
<line x1="512.50" y1="75.20" x2="518.90" y2="75.20" stroke="#10c8d0" stroke-width="1.45"/>
<line x1="512.50" y1="91.00" x2="528.60" y2="91.00" stroke="#10c8d0" stroke-width="1.45"/>
<line x1="512.50" y1="105.80" x2="533.70" y2="105.80" stroke="#10c8d0" stroke-width="1.45"/>
<line x1="512.50" y1="120.60" x2="535.80" y2="120.60" stroke="#10c8d0" stroke-width="1.45"/>
<line x1="512.50" y1="135.70" x2="539.00" y2="135.70" stroke="#10c8d0" stroke-width="1.45"/>
<line x1="512.50" y1="150.90" x2="539.00" y2="150.90" stroke="#10c8d0" stroke-width="1.45"/>
<line x1="512.50" y1="165.60" x2="536.90" y2="165.60" stroke="#10c8d0" stroke-width="1.45"/>
<line x1="512.50" y1="181.50" x2="536.20" y2="181.50" stroke="#10c8d0" stroke-width="1.45"/>
<line x1="512.50" y1="197.00" x2="536.20" y2="197.00" stroke="#d8d010" stroke-width="1.45"/>
<line x1="512.50" y1="211.90" x2="532.00" y2="211.90" stroke="#d8d010" stroke-width="1.45"/>
<line x1="512.50" y1="225.70" x2="530.90" y2="225.70" stroke="#d8d010" stroke-width="1.45"/>
<line x1="512.50" y1="238.40" x2="530.50" y2="238.40" stroke="#d8d010" stroke-width="1.45"/>
<line x1="512.50" y1="250.30" x2="530.90" y2="250.30" stroke="#d8d010" stroke-width="1.45"/>
<line x1="512.50" y1="260.60" x2="528.20" y2="260.60" stroke="#10e010" stroke-width="1.45"/>
<line x1="512.50" y1="270.50" x2="528.60" y2="270.50" stroke="#10e010" stroke-width="1.45"/>
<line x1="512.50" y1="280.30" x2="527.40" y2="280.30" stroke="#10e010" stroke-width="1.45"/>
<line x1="512.50" y1="289.30" x2="525.30" y2="289.30" stroke="#10e010" stroke-width="1.45"/>
<line x1="512.50" y1="297.70" x2="525.80" y2="297.70" stroke="#10e010" stroke-width="1.45"/>
<line x1="512.50" y1="305.70" x2="525.50" y2="305.70" stroke="#10e010" stroke-width="1.45"/>
<line x1="512.50" y1="313.10" x2="524.20" y2="313.10" stroke="#10e010" stroke-width="1.45"/>
<line x1="512.50" y1="319.70" x2="524.00" y2="319.70" stroke="#10e010" stroke-width="1.45"/>
<line x1="512.50" y1="326.70" x2="524.00" y2="326.70" stroke="#f01010" stroke-width="1.45"/>
<line x1="512.50" y1="332.50" x2="524.20" y2="332.50" stroke="#f01010" stroke-width="1.45"/>
<line x1="512.50" y1="337.60" x2="524.70" y2="337.60" stroke="#f01010" stroke-width="1.45"/>
<line x1="512.50" y1="342.60" x2="524.20" y2="342.60" stroke="#f01010" stroke-width="1.45"/>
<line x1="512.50" y1="346.90" x2="523.70" y2="346.90" stroke="#f01010" stroke-width="1.45"/>
<line x1="512.50" y1="351.20" x2="526.20" y2="351.20" stroke="#f01010" stroke-width="0.9"/>
<line x1="512.50" y1="352.65" x2="526.30" y2="352.65" stroke="#f01010" stroke-width="0.9"/>
<line x1="512.50" y1="354.10" x2="526.40" y2="354.10" stroke="#f01010" stroke-width="0.9"/>
<line x1="512.50" y1="355.55" x2="526.50" y2="355.55" stroke="#f01010" stroke-width="0.9"/>
<line x1="512.50" y1="357.00" x2="526.60" y2="357.00" stroke="#f01010" stroke-width="0.9"/>
<line x1="512.50" y1="358.45" x2="526.70" y2="358.45" stroke="#f01010" stroke-width="0.9"/>
<line x1="512.50" y1="359.90" x2="526.80" y2="359.90" stroke="#f01010" stroke-width="0.9"/>
<line x1="512.50" y1="361.35" x2="526.90" y2="361.35" stroke="#f01010" stroke-width="0.9"/>
<line x1="512.50" y1="362.80" x2="527.00" y2="362.80" stroke="#f01010" stroke-width="0.9"/>
<polygon points="512.5,363.5 527.0,363.5 526.5,367.0 525.0,371.0 522.5,375.0 519.5,378.0 516.0,380.0 512.5,380.3" fill="#f01010"/>
<line x1="511.50" y1="24.30" x2="601.00" y2="24.30" stroke="#c8c8c8" stroke-width="1.2"/>
<line x1="564.90" y1="24.30" x2="564.90" y2="407.30" stroke="#d8d8d8" stroke-width="1.5"/>
<line x1="600.30" y1="24.30" x2="600.30" y2="407.30" stroke="#d8d8d8" stroke-width="1.5"/>
<line x1="582.50" y1="26.00" x2="582.50" y2="407.00" stroke="#cfcfcf" stroke-width="0.9" stroke-dasharray="1.5,1.5"/>
<text x="565.8" y="30.12" font-size="5.0" fill="#e0e0e0" text-anchor="start" textLength="25.3" lengthAdjust="spacingAndGlyphs">Inf. Temp. Adv</text>
<text x="565.8" y="35.12" font-size="5.0" fill="#e0e0e0" text-anchor="start" textLength="11.0" lengthAdjust="spacingAndGlyphs">(C/hr)</text>
<rect x="582.50" y="125.80" width="1.79" height="70.20" fill="none" stroke="#b80c0c" stroke-width="1.0"/>
<rect x="582.50" y="196.00" width="3.28" height="48.00" fill="none" stroke="#b80c0c" stroke-width="1.0"/>
<rect x="582.50" y="244.00" width="1.19" height="38.80" fill="none" stroke="#b80c0c" stroke-width="1.0"/>
<rect x="582.50" y="312.90" width="2.38" height="25.40" fill="none" stroke="#b80c0c" stroke-width="1.0"/>
<rect x="582.50" y="338.30" width="11.32" height="22.30" fill="none" stroke="#b80c0c" stroke-width="1.0"/>
<rect x="582.50" y="360.60" width="4.77" height="20.40" fill="none" stroke="#b80c0c" stroke-width="1.0"/>
<line x1="582.60" y1="282.80" x2="582.60" y2="312.90" stroke="#3a90d8" stroke-width="1.3"/>
<text x="591.6" y="164.04" font-size="4.2" fill="#c01010" text-anchor="middle">1.2</text>
<text x="591.0" y="224.04" font-size="4.2" fill="#c01010" text-anchor="middle">2.2</text>
<text x="591.0" y="266.74" font-size="4.2" fill="#c01010" text-anchor="middle">0.8</text>
<text x="573.2" y="300.94" font-size="4.2" fill="#2a80c8" text-anchor="middle">-0.1</text>
<text x="592.0" y="329.64" font-size="4.2" fill="#c01010" text-anchor="middle">1.6</text>
<text x="591.3" y="353.04" font-size="4.2" fill="#c01010" text-anchor="middle">7.6</text>
<text x="591.3" y="374.24" font-size="4.2" fill="#c01010" text-anchor="middle">3.2</text>
<line x1="16.00" y1="407.60" x2="1024.00" y2="407.60" stroke="#e4e4e4" stroke-width="1.6"/>
<defs><clipPath id="hc"><rect x="601" y="25" width="423" height="285"/></clipPath></defs>
<g clip-path="url(#hc)">
<circle cx="811.7" cy="166.9" r="26.5" fill="none" stroke="#7a7a7a" stroke-width="0.8" stroke-dasharray="2,2"/>
<circle cx="811.7" cy="166.9" r="53.0" fill="none" stroke="#7a7a7a" stroke-width="0.8" stroke-dasharray="2,2"/>
<circle cx="811.7" cy="166.9" r="79.5" fill="none" stroke="#7a7a7a" stroke-width="0.8" stroke-dasharray="2,2"/>
<circle cx="811.7" cy="166.9" r="106.0" fill="none" stroke="#7a7a7a" stroke-width="0.8" stroke-dasharray="2,2"/>
<circle cx="811.7" cy="166.9" r="132.5" fill="none" stroke="#7a7a7a" stroke-width="0.8" stroke-dasharray="2,2"/>
<circle cx="811.7" cy="166.9" r="159.0" fill="none" stroke="#7a7a7a" stroke-width="0.8" stroke-dasharray="2,2"/>
<circle cx="811.7" cy="166.9" r="185.5" fill="none" stroke="#7a7a7a" stroke-width="0.8" stroke-dasharray="2,2"/>
<circle cx="811.7" cy="166.9" r="212.0" fill="none" stroke="#7a7a7a" stroke-width="0.8" stroke-dasharray="2,2"/>
<circle cx="811.7" cy="166.9" r="238.5" fill="none" stroke="#7a7a7a" stroke-width="0.8" stroke-dasharray="2,2"/>
<circle cx="811.7" cy="166.9" r="265.0" fill="none" stroke="#7a7a7a" stroke-width="0.8" stroke-dasharray="2,2"/>
<circle cx="811.7" cy="166.9" r="291.5" fill="none" stroke="#7a7a7a" stroke-width="0.8" stroke-dasharray="2,2"/>
<circle cx="811.7" cy="166.9" r="318.0" fill="none" stroke="#7a7a7a" stroke-width="0.8" stroke-dasharray="2,2"/>
<circle cx="811.7" cy="166.9" r="344.5" fill="none" stroke="#7a7a7a" stroke-width="0.8" stroke-dasharray="2,2"/>
<circle cx="811.7" cy="166.9" r="371.0" fill="none" stroke="#7a7a7a" stroke-width="0.8" stroke-dasharray="2,2"/>
<circle cx="811.7" cy="166.9" r="397.5" fill="none" stroke="#7a7a7a" stroke-width="0.8" stroke-dasharray="2,2"/>
</g>
<line x1="600.50" y1="166.90" x2="1024.00" y2="166.90" stroke="#e8e8e8" stroke-width="1.3"/>
<line x1="811.70" y1="24.30" x2="811.70" y2="310.50" stroke="#e8e8e8" stroke-width="1.3"/>
<line x1="600.30" y1="24.30" x2="1024.00" y2="24.30" stroke="#c8c8c8" stroke-width="1.2"/>
<text x="818.0" y="142.79" font-size="5.2" fill="#d8d8d8" text-anchor="middle">10</text>
<text x="818.0" y="196.29" font-size="5.2" fill="#d8d8d8" text-anchor="middle">10</text>
<text x="818.0" y="116.29" font-size="5.2" fill="#d8d8d8" text-anchor="middle">20</text>
<text x="818.0" y="222.79" font-size="5.2" fill="#d8d8d8" text-anchor="middle">20</text>
<text x="818.0" y="89.79" font-size="5.2" fill="#d8d8d8" text-anchor="middle">30</text>
<text x="818.0" y="249.29" font-size="5.2" fill="#d8d8d8" text-anchor="middle">30</text>
<text x="818.0" y="63.29" font-size="5.2" fill="#d8d8d8" text-anchor="middle">40</text>
<text x="818.0" y="275.79" font-size="5.2" fill="#d8d8d8" text-anchor="middle">40</text>
<text x="818.0" y="36.79" font-size="5.2" fill="#d8d8d8" text-anchor="middle">50</text>
<text x="818.0" y="302.29" font-size="5.2" fill="#d8d8d8" text-anchor="middle">50</text>
<text x="786.5" y="174.69" font-size="5.2" fill="#d8d8d8" text-anchor="middle">10</text>
<text x="839.5" y="174.69" font-size="5.2" fill="#d8d8d8" text-anchor="middle">10</text>
<text x="760.0" y="174.69" font-size="5.2" fill="#d8d8d8" text-anchor="middle">20</text>
<text x="866.0" y="174.69" font-size="5.2" fill="#d8d8d8" text-anchor="middle">20</text>
<text x="733.5" y="174.69" font-size="5.2" fill="#d8d8d8" text-anchor="middle">30</text>
<text x="892.5" y="174.69" font-size="5.2" fill="#d8d8d8" text-anchor="middle">30</text>
<text x="707.0" y="174.69" font-size="5.2" fill="#d8d8d8" text-anchor="middle">40</text>
<text x="919.0" y="174.69" font-size="5.2" fill="#d8d8d8" text-anchor="middle">40</text>
<text x="680.5" y="174.69" font-size="5.2" fill="#d8d8d8" text-anchor="middle">50</text>
<text x="945.5" y="174.69" font-size="5.2" fill="#d8d8d8" text-anchor="middle">50</text>
<text x="654.0" y="174.69" font-size="5.2" fill="#d8d8d8" text-anchor="middle">60</text>
<text x="972.0" y="174.69" font-size="5.2" fill="#d8d8d8" text-anchor="middle">60</text>
<text x="627.5" y="174.69" font-size="5.2" fill="#d8d8d8" text-anchor="middle">70</text>
<text x="998.5" y="174.69" font-size="5.2" fill="#d8d8d8" text-anchor="middle">70</text>
<text x="601.0" y="174.69" font-size="5.2" fill="#d8d8d8" text-anchor="middle">80</text>
<text x="1025.0" y="174.69" font-size="5.2" fill="#d8d8d8" text-anchor="middle">80</text>
<line x1="790.60" y1="125.90" x2="857.10" y2="129.80" stroke="#10a8b8" stroke-width="1.0"/>
<line x1="857.10" y1="129.80" x2="823.50" y2="71.10" stroke="#10a8b8" stroke-width="1.0"/>
<line x1="790.60" y1="125.90" x2="779.80" y2="75.40" stroke="#b020c0" stroke-width="1.0"/>
<polyline points="790.6,125.9 786.5,114.6 782.5,101.1 779.8,84.9 779.8,75.4 785.2,67.3 796.0,59.2 802.4,60.1 811.4,61.0 818.7,66.2 823.5,71.1 834.9,86.0 849.5,91.4 861.7,99.5 869.0,102.7 873.8,107.6 875.4,112.5" fill="none" stroke="#dc1010" stroke-width="1.5" stroke-linejoin="round"/>
<polyline points="875.4,113.0 884.6,108.5 886.8,107.4 894.7,106.7 898.0,104.0 900.3,99.5 908.1,98.0 918.2,92.1" fill="none" stroke="#10d010" stroke-width="1.5" stroke-linejoin="round"/>
<polyline points="918.2,90.5 920.5,92.8 936.2,104.0 968.8,106.3" fill="none" stroke="#d8d410" stroke-width="1.5" stroke-linejoin="round"/>
<polyline points="968.8,106.3 966.5,90.5 981.1,85.4 991.3,109.6 975.5,127.6 963.2,142.9" fill="none" stroke="#10b8c8" stroke-width="1.5" stroke-linejoin="round"/>
<circle cx="838.5" cy="55.7" r="2.7" fill="none" stroke="#e0e0e0" stroke-width="0.9"/>
<text x="843.0" y="63.62" font-size="5.0" fill="#e0e0e0" text-anchor="start">194/43 LM</text>
<circle cx="857.1" cy="129.8" r="2.6" fill="none" stroke="#e0e0e0" stroke-width="0.9"/>
<text x="860.8" y="137.92" font-size="5.0" fill="#e0e0e0" text-anchor="start">231/22 RM</text>
<rect x="879.40" y="99.50" width="3.80" height="3.80" fill="none" stroke="#e89010" stroke-width="0.9"/>
<text x="884.5" y="104.92" font-size="5.0" fill="#e89010" text-anchor="start">225/3</text>
<circle cx="949.7" cy="114.8" r="1.4" fill="none" stroke="#10a8d8" stroke-width="0.8"/>
<text x="953.5" y="120.92" font-size="5.0" fill="#10a8d8" text-anchor="start">DN=249/56</text>
<circle cx="891.2" cy="186.6" r="1.4" fill="none" stroke="#10a8d8" stroke-width="0.8"/>
<text x="895.5" y="192.22" font-size="5.0" fill="#10a8d8" text-anchor="start">UP=284/31</text>
<text x="608.0" y="297.47" font-size="6.6" fill="#10c0d0" text-anchor="start" textLength="55.9" lengthAdjust="spacingAndGlyphs">Critical Angle = 105</text>
<line x1="600.30" y1="310.40" x2="1024.00" y2="310.40" stroke="#e0e0e0" stroke-width="1.5"/>
<line x1="652.60" y1="311.00" x2="652.60" y2="407.00" stroke="#1a4a9a" stroke-width="1.2"/>
<line x1="601.00" y1="358.80" x2="706.00" y2="358.80" stroke="#1a4a9a" stroke-width="1.2"/>
<line x1="706.20" y1="310.40" x2="706.20" y2="407.30" stroke="#e0e0e0" stroke-width="1.5"/>
<text x="703.5" y="316.52" font-size="5.0" fill="#e0e0e0" text-anchor="end">74.0 deg</text>
<text x="602.5" y="406.79" font-size="5.2" fill="#e0e0e0" text-anchor="start">Storm Slinky</text>
<line x1="652.60" y1="358.80" x2="673.80" y2="341.70" stroke="#e8e8e8" stroke-width="1.2"/>
<circle cx="652.6" cy="358.8" r="2.6" fill="none" stroke="#e01010" stroke-width="0.9"/>
<circle cx="651.2" cy="355.2" r="2.6" fill="none" stroke="#e01010" stroke-width="0.9"/>
<circle cx="649.8" cy="351.8" r="2.6" fill="none" stroke="#e01010" stroke-width="0.9"/>
<circle cx="648.4" cy="348.4" r="2.6" fill="none" stroke="#e01010" stroke-width="0.9"/>
<circle cx="647.0" cy="345.0" r="2.6" fill="none" stroke="#e01010" stroke-width="0.9"/>
<circle cx="645.8" cy="341.8" r="2.6" fill="none" stroke="#e01010" stroke-width="0.9"/>
<circle cx="645.0" cy="338.8" r="2.6" fill="none" stroke="#e01010" stroke-width="0.9"/>
<circle cx="644.6" cy="336.2" r="2.6" fill="none" stroke="#e01010" stroke-width="0.9"/>
<circle cx="645.2" cy="334.0" r="2.6" fill="none" stroke="#40c010" stroke-width="0.9"/>
<circle cx="646.8" cy="332.2" r="2.6" fill="none" stroke="#80d010" stroke-width="0.9"/>
<circle cx="649.0" cy="331.0" r="2.6" fill="none" stroke="#a8c810" stroke-width="0.9"/>
<circle cx="651.5" cy="330.4" r="2.6" fill="none" stroke="#c8c010" stroke-width="0.9"/>
<circle cx="654.0" cy="330.2" r="2.6" fill="none" stroke="#d0c010" stroke-width="0.9"/>
<circle cx="659.1" cy="330.7" r="2.6" fill="none" stroke="#10b0c0" stroke-width="0.9"/>
<circle cx="664.7" cy="328.7" r="2.6" fill="none" stroke="#b010d0" stroke-width="0.9"/>
<line x1="811.90" y1="310.40" x2="811.90" y2="407.30" stroke="#e0e0e0" stroke-width="1.5"/>
<line x1="707.00" y1="333.00" x2="710.50" y2="333.00" stroke="#e0e0e0" stroke-width="1.0"/>
<text x="711.6" y="334.72" font-size="5.0" fill="#e0e0e0" text-anchor="start">600</text>
<line x1="707.00" y1="358.90" x2="710.50" y2="358.90" stroke="#e0e0e0" stroke-width="1.0"/>
<text x="711.6" y="360.62" font-size="5.0" fill="#e0e0e0" text-anchor="start">700</text>
<line x1="707.00" y1="384.80" x2="710.50" y2="384.80" stroke="#e0e0e0" stroke-width="1.0"/>
<text x="711.6" y="386.52" font-size="5.0" fill="#e0e0e0" text-anchor="start">800</text>
<line x1="707.00" y1="410.70" x2="710.50" y2="410.70" stroke="#e0e0e0" stroke-width="1.0"/>
<text x="711.6" y="412.42" font-size="5.0" fill="#e0e0e0" text-anchor="start">900</text>
<text x="712.4" y="403.92" font-size="5.0" fill="#e0e0e0" text-anchor="middle">310</text>
<line x1="712.40" y1="405.00" x2="712.40" y2="407.00" stroke="#e0e0e0" stroke-width="0.8"/>
<text x="734.0" y="403.92" font-size="5.0" fill="#e0e0e0" text-anchor="middle">320</text>
<line x1="734.02" y1="405.00" x2="734.02" y2="407.00" stroke="#e0e0e0" stroke-width="0.8"/>
<text x="755.6" y="403.92" font-size="5.0" fill="#e0e0e0" text-anchor="middle">330</text>
<line x1="755.64" y1="405.00" x2="755.64" y2="407.00" stroke="#e0e0e0" stroke-width="0.8"/>
<text x="777.3" y="403.92" font-size="5.0" fill="#e0e0e0" text-anchor="middle">340</text>
<line x1="777.26" y1="405.00" x2="777.26" y2="407.00" stroke="#e0e0e0" stroke-width="0.8"/>
<text x="798.9" y="403.92" font-size="5.0" fill="#e0e0e0" text-anchor="middle">350</text>
<line x1="798.88" y1="405.00" x2="798.88" y2="407.00" stroke="#e0e0e0" stroke-width="0.8"/>
<text x="754.9" y="329.67" font-size="9.8" fill="#e0e0e0" text-anchor="middle" textLength="34.2" lengthAdjust="spacingAndGlyphs">ThetaE v.</text>
<text x="755.5" y="339.67" font-size="9.8" fill="#e0e0e0" text-anchor="middle" textLength="17.8" lengthAdjust="spacingAndGlyphs">Pres</text>
<polyline points="737.3,317.0 745.6,329.9 728.0,343.3 742.5,355.8 744.6,361.0 750.8,366.1 773.6,376.5 777.7,379.6 781.5,383.8 780.8,398.3 778.1,407.2" fill="none" stroke="#f01010" stroke-width="1.6" stroke-linejoin="round"/>
<line x1="917.90" y1="310.40" x2="917.90" y2="407.30" stroke="#e0e0e0" stroke-width="1.5"/>
<text x="815.6" y="322.92" font-size="5.0" fill="#e0e0e0" text-anchor="middle">14</text>
<line x1="818.50" y1="321.20" x2="821.00" y2="321.20" stroke="#e0e0e0" stroke-width="0.9"/>
<line x1="915.50" y1="321.20" x2="918.00" y2="321.20" stroke="#e0e0e0" stroke-width="0.9"/>
<text x="815.6" y="335.12" font-size="5.0" fill="#e0e0e0" text-anchor="middle">12</text>
<line x1="818.50" y1="333.40" x2="821.00" y2="333.40" stroke="#e0e0e0" stroke-width="0.9"/>
<line x1="915.50" y1="333.40" x2="918.00" y2="333.40" stroke="#e0e0e0" stroke-width="0.9"/>
<text x="815.6" y="347.22" font-size="5.0" fill="#e0e0e0" text-anchor="middle">10</text>
<line x1="818.50" y1="345.50" x2="821.00" y2="345.50" stroke="#e0e0e0" stroke-width="0.9"/>
<line x1="915.50" y1="345.50" x2="918.00" y2="345.50" stroke="#e0e0e0" stroke-width="0.9"/>
<text x="815.6" y="359.52" font-size="5.0" fill="#e0e0e0" text-anchor="middle">8</text>
<line x1="818.50" y1="357.80" x2="821.00" y2="357.80" stroke="#e0e0e0" stroke-width="0.9"/>
<line x1="915.50" y1="357.80" x2="918.00" y2="357.80" stroke="#e0e0e0" stroke-width="0.9"/>
<text x="815.6" y="371.62" font-size="5.0" fill="#e0e0e0" text-anchor="middle">6</text>
<line x1="818.50" y1="369.90" x2="821.00" y2="369.90" stroke="#e0e0e0" stroke-width="0.9"/>
<line x1="915.50" y1="369.90" x2="918.00" y2="369.90" stroke="#e0e0e0" stroke-width="0.9"/>
<text x="815.6" y="383.42" font-size="5.0" fill="#e0e0e0" text-anchor="middle">4</text>
<line x1="818.50" y1="381.70" x2="821.00" y2="381.70" stroke="#e0e0e0" stroke-width="0.9"/>
<line x1="915.50" y1="381.70" x2="918.00" y2="381.70" stroke="#e0e0e0" stroke-width="0.9"/>
<text x="815.6" y="395.72" font-size="5.0" fill="#e0e0e0" text-anchor="middle">2</text>
<line x1="818.50" y1="394.00" x2="821.00" y2="394.00" stroke="#e0e0e0" stroke-width="0.9"/>
<line x1="915.50" y1="394.00" x2="918.00" y2="394.00" stroke="#e0e0e0" stroke-width="0.9"/>
<line x1="823.00" y1="311.00" x2="823.00" y2="313.50" stroke="#e0e0e0" stroke-width="0.9"/>
<line x1="823.00" y1="404.50" x2="823.00" y2="407.00" stroke="#e0e0e0" stroke-width="0.9"/>
<line x1="835.40" y1="311.00" x2="835.40" y2="313.50" stroke="#e0e0e0" stroke-width="0.9"/>
<line x1="835.40" y1="404.50" x2="835.40" y2="407.00" stroke="#e0e0e0" stroke-width="0.9"/>
<line x1="847.50" y1="311.00" x2="847.50" y2="313.50" stroke="#e0e0e0" stroke-width="0.9"/>
<line x1="847.50" y1="404.50" x2="847.50" y2="407.00" stroke="#e0e0e0" stroke-width="0.9"/>
<line x1="860.30" y1="311.00" x2="860.30" y2="313.50" stroke="#e0e0e0" stroke-width="0.9"/>
<line x1="860.30" y1="404.50" x2="860.30" y2="407.00" stroke="#e0e0e0" stroke-width="0.9"/>
<line x1="872.30" y1="311.00" x2="872.30" y2="313.50" stroke="#e0e0e0" stroke-width="0.9"/>
<line x1="872.30" y1="404.50" x2="872.30" y2="407.00" stroke="#e0e0e0" stroke-width="0.9"/>
<line x1="884.30" y1="311.00" x2="884.30" y2="313.50" stroke="#e0e0e0" stroke-width="0.9"/>
<line x1="884.30" y1="404.50" x2="884.30" y2="407.00" stroke="#e0e0e0" stroke-width="0.9"/>
<line x1="896.60" y1="311.00" x2="896.60" y2="313.50" stroke="#e0e0e0" stroke-width="0.9"/>
<line x1="896.60" y1="404.50" x2="896.60" y2="407.00" stroke="#e0e0e0" stroke-width="0.9"/>
<line x1="908.60" y1="311.00" x2="908.60" y2="313.50" stroke="#e0e0e0" stroke-width="0.9"/>
<line x1="908.60" y1="404.50" x2="908.60" y2="407.00" stroke="#e0e0e0" stroke-width="0.9"/>
<line x1="829.80" y1="311.00" x2="829.80" y2="407.00" stroke="#d0d0d0" stroke-width="0.9" stroke-dasharray="1.5,1.5"/>
<line x1="829.80" y1="368.20" x2="829.80" y2="382.70" stroke="#3a78d8" stroke-width="1.3"/>
<line x1="860.30" y1="311.00" x2="860.30" y2="357.80" stroke="#a010b0" stroke-width="0.9" stroke-dasharray="2,2"/>
<line x1="896.60" y1="311.00" x2="896.60" y2="357.80" stroke="#a010b0" stroke-width="0.9" stroke-dasharray="2,2"/>
<line x1="867.80" y1="338.20" x2="867.80" y2="351.60" stroke="#a010d0" stroke-width="1.4"/>
<text x="870.9" y="324.32" font-size="5.0" fill="#b010c0" text-anchor="middle" textLength="13.5" lengthAdjust="spacingAndGlyphs">Classic</text>
<text x="870.9" y="329.22" font-size="5.0" fill="#b010c0" text-anchor="middle" textLength="16.6" lengthAdjust="spacingAndGlyphs">Supercell</text>
<text x="829.8" y="318.45" font-size="4.8" fill="#e0e0e0" text-anchor="middle" textLength="15.6" lengthAdjust="spacingAndGlyphs">SR Wind</text>
<text x="829.8" y="323.35" font-size="4.8" fill="#e0e0e0" text-anchor="middle">v.</text>
<text x="829.8" y="328.35" font-size="4.8" fill="#e0e0e0" text-anchor="middle" textLength="11.5" lengthAdjust="spacingAndGlyphs">Height</text>
<polyline points="838.1,310.8 835.0,316.4 827.8,320.5 817.4,325.7 837.1,327.4 851.6,329.9 859.9,333.0 867.1,338.2 873.4,340.2 871.3,344.4 866.1,346.0 863.0,352.7 857.8,355.8 850.6,356.8 846.4,359.9 844.3,362.0 844.3,366.1 839.2,368.2 831.9,372.4 826.7,376.5 827.8,380.6 823.6,384.8 822.6,387.9 824.7,393.1 826.7,395.2 843.3,396.2 854.7,399.3 853.7,403.4 842.3,406.6" fill="none" stroke="#f01010" stroke-width="1.6" stroke-linejoin="round"/>
<line x1="847.00" y1="394.00" x2="847.00" y2="407.00" stroke="#c01010" stroke-width="0.9"/>
<line x1="918.00" y1="324.90" x2="1024.00" y2="324.90" stroke="#e0e0e0" stroke-width="1.3"/>
<text x="970.0" y="321.15" font-size="8.0" fill="#e8e8e8" text-anchor="middle" textLength="46.0" lengthAdjust="spacingAndGlyphs">Psbl Haz. Type</text>
<text x="970.0" y="365.85" font-size="8.0" fill="#e01010" text-anchor="middle">TOR</text>
<line x1="0.00" y1="420.20" x2="1024.00" y2="420.20" stroke="#3a9ad0" stroke-width="1.8"/>
<line x1="1.20" y1="420.00" x2="1.20" y2="555.00" stroke="#2a8ac0" stroke-width="2.2"/>
<line x1="0.00" y1="554.00" x2="1024.00" y2="554.00" stroke="#1e6a94" stroke-width="2.0"/>
<line x1="1022.60" y1="420.00" x2="1022.60" y2="555.00" stroke="#2272a0" stroke-width="1.4"/>
<line x1="257.20" y1="420.50" x2="257.20" y2="553.50" stroke="#2a80b8" stroke-width="1.1"/>
<line x1="512.40" y1="420.50" x2="512.40" y2="553.50" stroke="#2a80b8" stroke-width="1.1"/>
<line x1="767.60" y1="420.50" x2="767.60" y2="553.50" stroke="#2a80b8" stroke-width="1.1"/>
<text x="33.3" y="427.02" font-size="7.9" fill="#e6e6e6" text-anchor="middle" textLength="14.6" lengthAdjust="spacingAndGlyphs">PCL</text>
<text x="64.7" y="427.02" font-size="7.9" fill="#e6e6e6" text-anchor="middle" textLength="20.4" lengthAdjust="spacingAndGlyphs">CAPE</text>
<text x="96.5" y="427.02" font-size="7.9" fill="#e6e6e6" text-anchor="middle" textLength="18.3" lengthAdjust="spacingAndGlyphs">CINH</text>
<text x="127.8" y="427.02" font-size="7.9" fill="#e6e6e6" text-anchor="middle" textLength="13.8" lengthAdjust="spacingAndGlyphs">LCL</text>
<text x="159.4" y="427.02" font-size="7.9" fill="#e6e6e6" text-anchor="middle" textLength="6.3" lengthAdjust="spacingAndGlyphs">LI</text>
<text x="190.6" y="427.02" font-size="7.9" fill="#e6e6e6" text-anchor="middle" textLength="14.2" lengthAdjust="spacingAndGlyphs">LFC</text>
<text x="222.2" y="427.02" font-size="7.9" fill="#e6e6e6" text-anchor="middle" textLength="9.2" lengthAdjust="spacingAndGlyphs">EL</text>
<line x1="2.30" y1="428.30" x2="257.00" y2="428.30" stroke="#8c8c8c" stroke-width="1.2"/>
<text x="33.3" y="437.02" font-size="7.9" fill="#e6e6e6" text-anchor="middle" textLength="15.0" lengthAdjust="spacingAndGlyphs">SFC</text>
<text x="64.7" y="437.02" font-size="7.9" fill="#e6e6e6" text-anchor="middle" textLength="16.7" lengthAdjust="spacingAndGlyphs">2284</text>
<text x="96.5" y="437.02" font-size="7.9" fill="#e6e6e6" text-anchor="middle" textLength="10.8" lengthAdjust="spacingAndGlyphs">-34</text>
<text x="127.8" y="437.02" font-size="7.9" fill="#e6e6e6" text-anchor="middle" textLength="12.5" lengthAdjust="spacingAndGlyphs">774</text>
<text x="159.4" y="437.02" font-size="7.9" fill="#e6e6e6" text-anchor="middle" textLength="6.7" lengthAdjust="spacingAndGlyphs">-7</text>
<text x="190.6" y="437.02" font-size="7.9" fill="#e6e6e6" text-anchor="middle" textLength="16.1" lengthAdjust="spacingAndGlyphs">1185</text>
<text x="222.2" y="437.02" font-size="7.9" fill="#e6e6e6" text-anchor="middle" textLength="20.3" lengthAdjust="spacingAndGlyphs">11295</text>
<text x="33.3" y="444.02" font-size="7.9" fill="#e6e6e6" text-anchor="middle" textLength="10.4" lengthAdjust="spacingAndGlyphs">ML</text>
<text x="64.7" y="444.02" font-size="7.9" fill="#e6e6e6" text-anchor="middle" textLength="16.7" lengthAdjust="spacingAndGlyphs">2529</text>
<text x="96.5" y="444.02" font-size="7.9" fill="#e6e6e6" text-anchor="middle" textLength="6.7" lengthAdjust="spacingAndGlyphs">-5</text>
<text x="127.8" y="444.02" font-size="7.9" fill="#e6e6e6" text-anchor="middle" textLength="12.5" lengthAdjust="spacingAndGlyphs">904</text>
<text x="159.4" y="444.02" font-size="7.9" fill="#e6e6e6" text-anchor="middle" textLength="6.7" lengthAdjust="spacingAndGlyphs">-7</text>
<text x="190.6" y="444.02" font-size="7.9" fill="#e6e6e6" text-anchor="middle" textLength="16.1" lengthAdjust="spacingAndGlyphs">1109</text>
<text x="222.2" y="444.02" font-size="7.9" fill="#e6e6e6" text-anchor="middle" textLength="20.3" lengthAdjust="spacingAndGlyphs">11542</text>
<text x="33.3" y="451.02" font-size="7.9" fill="#e6e6e6" text-anchor="middle" textLength="19.6" lengthAdjust="spacingAndGlyphs">FCST</text>
<text x="64.7" y="451.02" font-size="7.9" fill="#e6e6e6" text-anchor="middle" textLength="16.7" lengthAdjust="spacingAndGlyphs">3230</text>
<text x="96.5" y="451.02" font-size="7.9" fill="#e6e6e6" text-anchor="middle" textLength="4.2" lengthAdjust="spacingAndGlyphs">0</text>
<text x="127.8" y="451.02" font-size="7.9" fill="#e6e6e6" text-anchor="middle" textLength="16.7" lengthAdjust="spacingAndGlyphs">1263</text>
<text x="159.4" y="451.02" font-size="7.9" fill="#e6e6e6" text-anchor="middle" textLength="6.7" lengthAdjust="spacingAndGlyphs">-9</text>
<text x="190.6" y="451.02" font-size="7.9" fill="#e6e6e6" text-anchor="middle" textLength="16.7" lengthAdjust="spacingAndGlyphs">1263</text>
<text x="222.2" y="451.02" font-size="7.9" fill="#e6e6e6" text-anchor="middle" textLength="20.3" lengthAdjust="spacingAndGlyphs">11715</text>
<text x="33.3" y="458.12" font-size="7.9" fill="#10b8c0" text-anchor="middle" textLength="11.7" lengthAdjust="spacingAndGlyphs">MU</text>
<text x="64.7" y="458.12" font-size="7.9" fill="#e0e010" text-anchor="middle" textLength="16.7" lengthAdjust="spacingAndGlyphs">2623</text>
<text x="96.5" y="458.12" font-size="7.9" fill="#10c010" text-anchor="middle" textLength="4.2" lengthAdjust="spacingAndGlyphs">0</text>
<text x="127.8" y="458.12" font-size="7.9" fill="#e6e6e6" text-anchor="middle" textLength="16.1" lengthAdjust="spacingAndGlyphs">1011</text>
<text x="159.4" y="458.12" font-size="7.9" fill="#e6e6e6" text-anchor="middle" textLength="6.7" lengthAdjust="spacingAndGlyphs">-7</text>
<text x="190.6" y="458.12" font-size="7.9" fill="#e6e6e6" text-anchor="middle" textLength="16.7" lengthAdjust="spacingAndGlyphs">1056</text>
<text x="222.2" y="458.12" font-size="7.9" fill="#e6e6e6" text-anchor="middle" textLength="20.3" lengthAdjust="spacingAndGlyphs">11542</text>
<rect x="3.50" y="452.40" width="250.50" height="6.60" fill="none" stroke="#5a3e14" stroke-width="0.9"/>
<line x1="2.30" y1="460.50" x2="257.00" y2="460.50" stroke="#8c8c8c" stroke-width="1.2"/>
<text x="4.8" y="470.22" font-size="7.9" fill="#e6e6e6" text-anchor="start" textLength="41.1" lengthAdjust="spacingAndGlyphs">PW = 0.89in</text>
<text x="89.5" y="470.22" font-size="7.9" fill="#e6e6e6" text-anchor="start" textLength="21.9" lengthAdjust="spacingAndGlyphs">K = 34</text>
<text x="153.1" y="470.22" font-size="7.9" fill="#e6e6e6" text-anchor="start" textLength="42.7" lengthAdjust="spacingAndGlyphs">WNDG = 1.2</text>
<text x="4.8" y="477.12" font-size="7.9" fill="#e6e6e6" text-anchor="start" textLength="62.6" lengthAdjust="spacingAndGlyphs">MeanW = 11.4g/kg</text>
<text x="89.5" y="477.12" font-size="7.9" fill="#e6e6e6" text-anchor="start" textLength="25.9" lengthAdjust="spacingAndGlyphs">TT = 58</text>
<text x="153.1" y="477.12" font-size="7.9" fill="#e6e6e6" text-anchor="start" textLength="28.6" lengthAdjust="spacingAndGlyphs">TEI = 25</text>
<text x="4.8" y="484.02" font-size="7.9" fill="#e6e6e6" text-anchor="start" textLength="48.1" lengthAdjust="spacingAndGlyphs">LowRH = 81%</text>
<text x="89.5" y="484.02" font-size="7.9" fill="#e6e6e6" text-anchor="start" textLength="43.4" lengthAdjust="spacingAndGlyphs">ConvT = 72F</text>
<text x="153.1" y="484.02" font-size="7.9" fill="#e6e6e6" text-anchor="start" textLength="45.1" lengthAdjust="spacingAndGlyphs">3CAPE = 116</text>
<text x="4.8" y="490.92" font-size="7.9" fill="#e6e6e6" text-anchor="start" textLength="46.5" lengthAdjust="spacingAndGlyphs">MidRH = 41%</text>
<text x="89.5" y="490.92" font-size="7.9" fill="#e6e6e6" text-anchor="start" textLength="40.1" lengthAdjust="spacingAndGlyphs">maxT = 75F</text>
<text x="4.8" y="497.82" font-size="7.9" fill="#e6e6e6" text-anchor="start" textLength="50.5" lengthAdjust="spacingAndGlyphs">DCAPE = 1164</text>
<text x="89.5" y="497.82" font-size="7.9" fill="#e6e6e6" text-anchor="start" textLength="33.8" lengthAdjust="spacingAndGlyphs">ESP = 0.6</text>
<text x="4.8" y="504.72" font-size="7.9" fill="#e6e6e6" text-anchor="start" textLength="45.1" lengthAdjust="spacingAndGlyphs">DownT = 49F</text>
<text x="89.5" y="504.72" font-size="7.9" fill="#e6e6e6" text-anchor="start" textLength="36.3" lengthAdjust="spacingAndGlyphs">MMP = 1.0</text>
<text x="153.1" y="504.72" font-size="7.9" fill="#e6e6e6" text-anchor="start" textLength="73.4" lengthAdjust="spacingAndGlyphs">SigSvr = 59411 m3/s3</text>
<line x1="2.30" y1="506.20" x2="257.00" y2="506.20" stroke="#8c8c8c" stroke-width="1.2"/>
<line x1="175.30" y1="506.20" x2="175.30" y2="553.50" stroke="#8c8c8c" stroke-width="1.2"/>
<text x="5.0" y="515.42" font-size="7.9" fill="#e6e6e6" text-anchor="start" textLength="94.1" lengthAdjust="spacingAndGlyphs">Sfc-3km AGL LR = 7.3 C/km</text>
<text x="5.0" y="522.32" font-size="7.9" fill="#e6e6e6" text-anchor="start" textLength="87.5" lengthAdjust="spacingAndGlyphs">3-6km AGL LR = 7.9 C/km</text>
<text x="5.0" y="529.22" font-size="7.9" fill="#e6e6e6" text-anchor="start" textLength="88.2" lengthAdjust="spacingAndGlyphs">850-500mb LR = 7.7 C/km</text>
<text x="5.0" y="536.12" font-size="7.9" fill="#e6e6e6" text-anchor="start" textLength="88.2" lengthAdjust="spacingAndGlyphs">700-500mb LR = 7.7 C/km</text>
<text x="177.6" y="515.72" font-size="7.9" fill="#f01818" text-anchor="start" textLength="54.4" lengthAdjust="spacingAndGlyphs">Supercell = 14.0</text>
<text x="177.6" y="522.52" font-size="7.9" fill="#e0e010" text-anchor="start" textLength="50.1" lengthAdjust="spacingAndGlyphs">STP (cin) = 3.3</text>
<text x="177.6" y="529.32" font-size="7.9" fill="#e0e010" text-anchor="start" textLength="48.0" lengthAdjust="spacingAndGlyphs">STP (fix) = 2.4</text>
<text x="177.6" y="536.12" font-size="7.9" fill="#e0e010" text-anchor="start" textLength="36.3" lengthAdjust="spacingAndGlyphs">SHIP = 1.7</text>
<text x="332.4" y="428.02" font-size="7.9" fill="#e6e6e6" text-anchor="middle" textLength="43.3" lengthAdjust="spacingAndGlyphs">SRH (m2/s2)</text>
<text x="396.1" y="428.02" font-size="7.9" fill="#e6e6e6" text-anchor="middle" textLength="32.9" lengthAdjust="spacingAndGlyphs">Shear (kt)</text>
<text x="445.9" y="428.02" font-size="7.9" fill="#e6e6e6" text-anchor="middle" textLength="27.5" lengthAdjust="spacingAndGlyphs">MnWind</text>
<text x="492.9" y="428.02" font-size="7.9" fill="#e6e6e6" text-anchor="middle" textLength="17.4" lengthAdjust="spacingAndGlyphs">SRW</text>
<line x1="257.50" y1="429.80" x2="512.00" y2="429.80" stroke="#8c8c8c" stroke-width="1.2"/>
<text x="260.4" y="438.32" font-size="7.9" fill="#e6e6e6" text-anchor="start" textLength="31.7" lengthAdjust="spacingAndGlyphs">SFC-1km</text>
<text x="351.3" y="438.32" font-size="7.9" fill="#e6e6e6" text-anchor="middle" textLength="12.5" lengthAdjust="spacingAndGlyphs">203</text>
<text x="408.3" y="438.32" font-size="7.9" fill="#e6e6e6" text-anchor="end" textLength="8.3" lengthAdjust="spacingAndGlyphs">25</text>
<text x="446.3" y="438.32" font-size="7.9" fill="#e6e6e6" text-anchor="middle" textLength="22.9" lengthAdjust="spacingAndGlyphs">161/34</text>
<text x="496.7" y="438.32" font-size="7.9" fill="#e6e6e6" text-anchor="middle" textLength="22.9" lengthAdjust="spacingAndGlyphs">123/33</text>
<text x="260.4" y="445.32" font-size="7.9" fill="#e6e6e6" text-anchor="start" textLength="31.7" lengthAdjust="spacingAndGlyphs">SFC-3km</text>
<text x="351.3" y="445.32" font-size="7.9" fill="#e6e6e6" text-anchor="middle" textLength="12.5" lengthAdjust="spacingAndGlyphs">331</text>
<text x="408.3" y="445.32" font-size="7.9" fill="#e6e6e6" text-anchor="end" textLength="8.3" lengthAdjust="spacingAndGlyphs">33</text>
<text x="446.3" y="445.32" font-size="7.9" fill="#e6e6e6" text-anchor="middle" textLength="22.9" lengthAdjust="spacingAndGlyphs">184/31</text>
<text x="496.7" y="445.32" font-size="7.9" fill="#e6e6e6" text-anchor="middle" textLength="22.9" lengthAdjust="spacingAndGlyphs">139/23</text>
<text x="260.4" y="452.32" font-size="7.9" fill="#e6e6e6" text-anchor="start" textLength="51.6" lengthAdjust="spacingAndGlyphs">Eff Inflow Layer</text>
<text x="351.3" y="452.32" font-size="7.9" fill="#e6e6e6" text-anchor="middle" textLength="12.5" lengthAdjust="spacingAndGlyphs">267</text>
<text x="408.3" y="452.32" font-size="7.9" fill="#e6e6e6" text-anchor="end" textLength="8.3" lengthAdjust="spacingAndGlyphs">24</text>
<text x="446.3" y="452.32" font-size="7.9" fill="#e6e6e6" text-anchor="middle" textLength="22.9" lengthAdjust="spacingAndGlyphs">166/35</text>
<text x="496.7" y="452.32" font-size="7.9" fill="#e6e6e6" text-anchor="middle" textLength="22.9" lengthAdjust="spacingAndGlyphs">129/33</text>
<text x="260.4" y="462.92" font-size="7.9" fill="#e6e6e6" text-anchor="start" textLength="31.7" lengthAdjust="spacingAndGlyphs">SFC-6km</text>
<text x="408.3" y="462.92" font-size="7.9" fill="#e6e6e6" text-anchor="end" textLength="8.3" lengthAdjust="spacingAndGlyphs">46</text>
<text x="446.3" y="462.92" font-size="7.9" fill="#e6e6e6" text-anchor="middle" textLength="22.9" lengthAdjust="spacingAndGlyphs">202/30</text>
<text x="496.7" y="462.92" font-size="7.9" fill="#e6e6e6" text-anchor="middle" textLength="22.9" lengthAdjust="spacingAndGlyphs">157/15</text>
<text x="260.4" y="469.82" font-size="7.9" fill="#e6e6e6" text-anchor="start" textLength="31.7" lengthAdjust="spacingAndGlyphs">SFC-8km</text>
<text x="408.3" y="469.82" font-size="7.9" fill="#e6e6e6" text-anchor="end" textLength="8.3" lengthAdjust="spacingAndGlyphs">56</text>
<text x="446.3" y="469.82" font-size="7.9" fill="#e6e6e6" text-anchor="middle" textLength="22.9" lengthAdjust="spacingAndGlyphs">207/31</text>
<text x="496.7" y="469.82" font-size="7.9" fill="#e6e6e6" text-anchor="middle" textLength="22.9" lengthAdjust="spacingAndGlyphs">169/14</text>
<text x="260.4" y="476.72" font-size="7.9" fill="#e6e6e6" text-anchor="start" textLength="72.7" lengthAdjust="spacingAndGlyphs">LCL-EL (Cloud Layer)</text>
<text x="408.3" y="476.72" font-size="7.9" fill="#e6e6e6" text-anchor="end" textLength="8.3" lengthAdjust="spacingAndGlyphs">72</text>
<text x="446.3" y="476.72" font-size="7.9" fill="#e6e6e6" text-anchor="middle" textLength="22.9" lengthAdjust="spacingAndGlyphs">225/37</text>
<text x="496.7" y="476.72" font-size="7.9" fill="#e6e6e6" text-anchor="middle" textLength="22.9" lengthAdjust="spacingAndGlyphs">217/16</text>
<text x="260.4" y="483.72" font-size="7.9" fill="#e6e6e6" text-anchor="start" textLength="60.7" lengthAdjust="spacingAndGlyphs">Eff Shear (EBWD)</text>
<text x="408.3" y="483.72" font-size="7.9" fill="#e6e6e6" text-anchor="end" textLength="8.3" lengthAdjust="spacingAndGlyphs">43</text>
<text x="446.3" y="483.72" font-size="7.9" fill="#e6e6e6" text-anchor="middle" textLength="22.9" lengthAdjust="spacingAndGlyphs">201/30</text>
<text x="496.7" y="483.72" font-size="7.9" fill="#e6e6e6" text-anchor="middle" textLength="22.9" lengthAdjust="spacingAndGlyphs">155/16</text>
<text x="260.4" y="494.02" font-size="7.9" fill="#e6e6e6" text-anchor="start" textLength="44.4" lengthAdjust="spacingAndGlyphs">BRN Shear =</text>
<text x="376.8" y="494.02" font-size="7.9" fill="#e6e6e6" text-anchor="start" textLength="30.8" lengthAdjust="spacingAndGlyphs">67 m2/s2</text>
<text x="260.4" y="500.82" font-size="7.9" fill="#e6e6e6" text-anchor="start" textLength="59.0" lengthAdjust="spacingAndGlyphs">4-6km SR Wind =</text>
<text x="376.8" y="500.82" font-size="7.9" fill="#e6e6e6" text-anchor="start" textLength="30.9" lengthAdjust="spacingAndGlyphs">230/13 kt</text>
<text x="260.4" y="511.22" font-size="7.9" fill="#e6e6e6" text-anchor="start" textLength="84.2" lengthAdjust="spacingAndGlyphs">...Storm Motion Vectors...</text>
<text x="260.4" y="518.22" font-size="7.9" fill="#e6e6e6" text-anchor="start" textLength="53.6" lengthAdjust="spacingAndGlyphs">Bunkers Right =</text>
<text x="376.8" y="518.22" font-size="7.9" fill="#2aa0d8" text-anchor="start" textLength="30.9" lengthAdjust="spacingAndGlyphs">231/22 kt</text>
<text x="260.4" y="525.07" font-size="7.9" fill="#e6e6e6" text-anchor="start" textLength="48.6" lengthAdjust="spacingAndGlyphs">Bunkers Left =</text>
<text x="376.8" y="525.07" font-size="7.9" fill="#f06060" text-anchor="start" textLength="30.9" lengthAdjust="spacingAndGlyphs">194/43 kt</text>
<text x="260.4" y="531.92" font-size="7.9" fill="#e6e6e6" text-anchor="start" textLength="68.2" lengthAdjust="spacingAndGlyphs">Corfidi Downshear =</text>
<text x="376.8" y="531.92" font-size="7.9" fill="#e6e6e6" text-anchor="start" textLength="30.9" lengthAdjust="spacingAndGlyphs">249/56 kt</text>
<text x="260.4" y="538.77" font-size="7.9" fill="#e6e6e6" text-anchor="start" textLength="58.6" lengthAdjust="spacingAndGlyphs">Corfidi Upshear =</text>
<text x="376.8" y="538.77" font-size="7.9" fill="#e6e6e6" text-anchor="start" textLength="30.9" lengthAdjust="spacingAndGlyphs">284/31 kt</text>
<text x="458.3" y="529.92" font-size="7.9" fill="#2a7ac8" text-anchor="middle" textLength="54.2" lengthAdjust="spacingAndGlyphs">1km &amp; 6km AGL</text>
<text x="458.3" y="538.22" font-size="7.9" fill="#2a7ac8" text-anchor="middle" textLength="38.8" lengthAdjust="spacingAndGlyphs">Wind Barbs</text>
<line x1="458.00" y1="507.90" x2="447.20" y2="515.50" stroke="#1a70c0" stroke-width="0.9"/>
<line x1="453.14" y1="511.32" x2="450.24" y2="507.32" stroke="#1a70c0" stroke-width="0.9"/>
<line x1="451.74" y1="512.31" x2="448.84" y2="508.31" stroke="#1a70c0" stroke-width="0.9"/>
<line x1="450.33" y1="513.30" x2="447.43" y2="509.30" stroke="#1a70c0" stroke-width="0.9"/>
<line x1="448.93" y1="514.28" x2="446.03" y2="510.28" stroke="#1a70c0" stroke-width="0.9"/>
<line x1="447.52" y1="515.27" x2="444.62" y2="511.27" stroke="#1a70c0" stroke-width="0.9"/>
<line x1="458.30" y1="507.90" x2="460.50" y2="521.60" stroke="#b01818" stroke-width="0.9"/>
<line x1="459.49" y1="515.30" x2="453.99" y2="515.30" stroke="#b01818" stroke-width="0.9"/>
<line x1="459.81" y1="517.30" x2="454.31" y2="517.30" stroke="#b01818" stroke-width="0.9"/>
<line x1="460.13" y1="519.30" x2="454.63" y2="519.30" stroke="#b01818" stroke-width="0.9"/>
<line x1="460.45" y1="521.30" x2="454.95" y2="521.30" stroke="#b01818" stroke-width="0.9"/>
<text x="640.0" y="431.86" font-size="12.1" fill="#e6e6e6" text-anchor="middle" textLength="192.2" lengthAdjust="spacingAndGlyphs">SARS - Sounding Analogue System</text>
<line x1="512.80" y1="435.50" x2="767.20" y2="435.50" stroke="#8c8c8c" stroke-width="1.3"/>
<line x1="640.00" y1="435.50" x2="640.00" y2="553.50" stroke="#8c8c8c" stroke-width="1.3"/>
<text x="575.4" y="444.69" font-size="8.4" fill="#e6e6e6" text-anchor="middle" textLength="55.6" lengthAdjust="spacingAndGlyphs">SUPERCELL</text>
<text x="701.2" y="444.69" font-size="8.4" fill="#e6e6e6" text-anchor="middle" textLength="53.3" lengthAdjust="spacingAndGlyphs">SGFNT HAIL</text>
<text x="515.6" y="453.92" font-size="8.2" fill="#e81010" text-anchor="start" textLength="49.6" lengthAdjust="spacingAndGlyphs">03042503.JAN</text>
<text x="608.5" y="453.92" font-size="8.2" fill="#e81010" text-anchor="start" textLength="13.1" lengthAdjust="spacingAndGlyphs">SIG</text>
<text x="515.6" y="460.87" font-size="8.2" fill="#e81010" text-anchor="start" textLength="53.8" lengthAdjust="spacingAndGlyphs">74040400.MGM</text>
<text x="608.5" y="460.87" font-size="8.2" fill="#e81010" text-anchor="start" textLength="13.1" lengthAdjust="spacingAndGlyphs">SIG</text>
<text x="515.6" y="467.82" font-size="8.2" fill="#2a8ad8" text-anchor="start" textLength="51.3" lengthAdjust="spacingAndGlyphs">00032902.CRS</text>
<text x="608.5" y="467.82" font-size="8.2" fill="#2a8ad8" text-anchor="start" textLength="22.4" lengthAdjust="spacingAndGlyphs">WEAK</text>
<text x="515.6" y="474.77" font-size="8.2" fill="#2a8ad8" text-anchor="start" textLength="51.3" lengthAdjust="spacingAndGlyphs">00022502.ARN</text>
<text x="608.5" y="474.77" font-size="8.2" fill="#2a8ad8" text-anchor="start" textLength="22.4" lengthAdjust="spacingAndGlyphs">WEAK</text>
<text x="515.6" y="481.72" font-size="8.2" fill="#2a8ad8" text-anchor="start" textLength="51.3" lengthAdjust="spacingAndGlyphs">01050602.COT</text>
<text x="608.5" y="481.72" font-size="8.2" fill="#2a8ad8" text-anchor="start" textLength="22.4" lengthAdjust="spacingAndGlyphs">WEAK</text>
<text x="515.6" y="488.67" font-size="8.2" fill="#2a8ad8" text-anchor="start" textLength="49.2" lengthAdjust="spacingAndGlyphs">04032721.C33</text>
<text x="608.5" y="488.67" font-size="8.2" fill="#2a8ad8" text-anchor="start" textLength="22.4" lengthAdjust="spacingAndGlyphs">WEAK</text>
<text x="515.6" y="495.62" font-size="8.2" fill="#2a8ad8" text-anchor="start" textLength="52.1" lengthAdjust="spacingAndGlyphs">04032718.GAG</text>
<text x="608.5" y="495.62" font-size="8.2" fill="#2a8ad8" text-anchor="start" textLength="22.4" lengthAdjust="spacingAndGlyphs">WEAK</text>
<text x="515.6" y="502.57" font-size="8.2" fill="#2a8ad8" text-anchor="start" textLength="48.0" lengthAdjust="spacingAndGlyphs">04052201.AIH</text>
<text x="608.5" y="502.57" font-size="8.2" fill="#2a8ad8" text-anchor="start" textLength="22.4" lengthAdjust="spacingAndGlyphs">WEAK</text>
<text x="515.6" y="509.52" font-size="8.2" fill="#2a8ad8" text-anchor="start" textLength="51.7" lengthAdjust="spacingAndGlyphs">04052400.MKX</text>
<text x="608.5" y="509.52" font-size="8.2" fill="#2a8ad8" text-anchor="start" textLength="22.4" lengthAdjust="spacingAndGlyphs">WEAK</text>
<text x="515.6" y="516.47" font-size="8.2" fill="#2a8ad8" text-anchor="start" textLength="52.5" lengthAdjust="spacingAndGlyphs">04052301.OMA</text>
<text x="608.5" y="516.47" font-size="8.2" fill="#2a8ad8" text-anchor="start" textLength="22.4" lengthAdjust="spacingAndGlyphs">WEAK</text>
<text x="515.6" y="523.42" font-size="8.2" fill="#2a8ad8" text-anchor="start" textLength="48.0" lengthAdjust="spacingAndGlyphs">99043021.INK</text>
<text x="608.5" y="523.42" font-size="8.2" fill="#2a8ad8" text-anchor="start" textLength="22.4" lengthAdjust="spacingAndGlyphs">WEAK</text>
<text x="515.6" y="530.37" font-size="8.2" fill="#2a8ad8" text-anchor="start" textLength="52.5" lengthAdjust="spacingAndGlyphs">99042300.MKO</text>
<text x="608.5" y="530.37" font-size="8.2" fill="#2a8ad8" text-anchor="start" textLength="22.4" lengthAdjust="spacingAndGlyphs">WEAK</text>
<text x="515.6" y="537.32" font-size="8.2" fill="#2a8ad8" text-anchor="start" textLength="51.3" lengthAdjust="spacingAndGlyphs">99080923.MKT</text>
<text x="608.5" y="537.32" font-size="8.2" fill="#2a8ad8" text-anchor="start" textLength="22.4" lengthAdjust="spacingAndGlyphs">WEAK</text>
<text x="515.6" y="544.27" font-size="8.2" fill="#a86a10" text-anchor="start" textLength="53.4" lengthAdjust="spacingAndGlyphs">03043021.SWO</text>
<text x="608.5" y="544.27" font-size="8.2" fill="#a86a10" text-anchor="start" textLength="16.9" lengthAdjust="spacingAndGlyphs">NON</text>
<text x="515.6" y="551.22" font-size="8.2" fill="#a86a10" text-anchor="start" textLength="53.4" lengthAdjust="spacingAndGlyphs">04050101.SWO</text>
<text x="608.5" y="551.22" font-size="8.2" fill="#a86a10" text-anchor="start" textLength="16.9" lengthAdjust="spacingAndGlyphs">NON</text>
<text x="575.6" y="543.38" font-size="7.5" fill="#c818d8" text-anchor="middle" textLength="66.8" lengthAdjust="spacingAndGlyphs">(229 loose matches)</text>
<text x="575.8" y="550.48" font-size="7.5" fill="#c818d8" text-anchor="middle" textLength="60.0" lengthAdjust="spacingAndGlyphs">SARS: 79% TOR</text>
<text x="644.6" y="453.08" font-size="7.5" fill="#e81010" text-anchor="start" textLength="52.0" lengthAdjust="spacingAndGlyphs">02041212.AMA</text>
<text x="756.3" y="453.22" font-size="7.9" fill="#e81010" text-anchor="end" textLength="14.6" lengthAdjust="spacingAndGlyphs">2.50</text>
<text x="701.7" y="543.38" font-size="7.5" fill="#c818d8" text-anchor="middle" textLength="72.6" lengthAdjust="spacingAndGlyphs">(172 loose matches)</text>
<text x="701.7" y="550.48" font-size="7.5" fill="#c818d8" text-anchor="middle" textLength="56.0" lengthAdjust="spacingAndGlyphs">SARS: 70% SIG</text>
<text x="896.7" y="427.73" font-size="9.1" fill="#e6e6e6" text-anchor="middle" textLength="123.2" lengthAdjust="spacingAndGlyphs">Effective Layer STP (with CIN)</text>
<line x1="772.00" y1="543.00" x2="1022.00" y2="543.00" stroke="#1a5aa0" stroke-width="1.0" stroke-dasharray="1.8,1.5"/>
<line x1="767.80" y1="543.00" x2="770.00" y2="543.00" stroke="#2a7ab8" stroke-width="1.0"/>
<text x="770.3" y="548.06" font-size="6.0" fill="#e6e6e6" text-anchor="start">0</text>
<line x1="772.00" y1="532.63" x2="1022.00" y2="532.63" stroke="#1a5aa0" stroke-width="1.0" stroke-dasharray="1.8,1.5"/>
<line x1="767.80" y1="532.63" x2="770.00" y2="532.63" stroke="#2a7ab8" stroke-width="1.0"/>
<text x="770.3" y="537.69" font-size="6.0" fill="#e6e6e6" text-anchor="start">1</text>
<line x1="772.00" y1="522.26" x2="1022.00" y2="522.26" stroke="#1a5aa0" stroke-width="1.0" stroke-dasharray="1.8,1.5"/>
<line x1="767.80" y1="522.26" x2="770.00" y2="522.26" stroke="#2a7ab8" stroke-width="1.0"/>
<text x="770.3" y="527.32" font-size="6.0" fill="#e6e6e6" text-anchor="start">2</text>
<line x1="772.00" y1="511.89" x2="1022.00" y2="511.89" stroke="#1a5aa0" stroke-width="1.0" stroke-dasharray="1.8,1.5"/>
<line x1="767.80" y1="511.89" x2="770.00" y2="511.89" stroke="#2a7ab8" stroke-width="1.0"/>
<text x="770.3" y="516.95" font-size="6.0" fill="#e6e6e6" text-anchor="start">3</text>
<line x1="772.00" y1="501.52" x2="1022.00" y2="501.52" stroke="#1a5aa0" stroke-width="1.0" stroke-dasharray="1.8,1.5"/>
<line x1="767.80" y1="501.52" x2="770.00" y2="501.52" stroke="#2a7ab8" stroke-width="1.0"/>
<text x="770.3" y="506.58" font-size="6.0" fill="#e6e6e6" text-anchor="start">4</text>
<line x1="772.00" y1="491.15" x2="1022.00" y2="491.15" stroke="#1a5aa0" stroke-width="1.0" stroke-dasharray="1.8,1.5"/>
<line x1="767.80" y1="491.15" x2="770.00" y2="491.15" stroke="#2a7ab8" stroke-width="1.0"/>
<text x="770.3" y="496.21" font-size="6.0" fill="#e6e6e6" text-anchor="start">5</text>
<line x1="772.00" y1="480.78" x2="1022.00" y2="480.78" stroke="#1a5aa0" stroke-width="1.0" stroke-dasharray="1.8,1.5"/>
<line x1="767.80" y1="480.78" x2="770.00" y2="480.78" stroke="#2a7ab8" stroke-width="1.0"/>
<text x="770.3" y="485.84" font-size="6.0" fill="#e6e6e6" text-anchor="start">6</text>
<line x1="772.00" y1="470.41" x2="1022.00" y2="470.41" stroke="#1a5aa0" stroke-width="1.0" stroke-dasharray="1.8,1.5"/>
<line x1="767.80" y1="470.41" x2="770.00" y2="470.41" stroke="#2a7ab8" stroke-width="1.0"/>
<text x="770.3" y="475.47" font-size="6.0" fill="#e6e6e6" text-anchor="start">7</text>
<line x1="772.00" y1="460.04" x2="1022.00" y2="460.04" stroke="#1a5aa0" stroke-width="1.0" stroke-dasharray="1.8,1.5"/>
<line x1="767.80" y1="460.04" x2="770.00" y2="460.04" stroke="#2a7ab8" stroke-width="1.0"/>
<text x="770.3" y="465.10" font-size="6.0" fill="#e6e6e6" text-anchor="start">8</text>
<line x1="772.00" y1="449.67" x2="1022.00" y2="449.67" stroke="#1a5aa0" stroke-width="1.0" stroke-dasharray="1.8,1.5"/>
<line x1="767.80" y1="449.67" x2="770.00" y2="449.67" stroke="#2a7ab8" stroke-width="1.0"/>
<text x="770.3" y="454.73" font-size="6.0" fill="#e6e6e6" text-anchor="start">9</text>
<line x1="772.00" y1="439.30" x2="1022.00" y2="439.30" stroke="#1a5aa0" stroke-width="1.0" stroke-dasharray="1.8,1.5"/>
<line x1="767.80" y1="439.30" x2="770.00" y2="439.30" stroke="#2a7ab8" stroke-width="1.0"/>
<text x="770.3" y="444.36" font-size="6.0" fill="#e6e6e6" text-anchor="start">10</text>
<line x1="772.00" y1="428.93" x2="1022.00" y2="428.93" stroke="#1a5aa0" stroke-width="1.0" stroke-dasharray="1.8,1.5"/>
<line x1="767.80" y1="428.93" x2="770.00" y2="428.93" stroke="#2a7ab8" stroke-width="1.0"/>
<text x="770.3" y="433.99" font-size="6.0" fill="#e6e6e6" text-anchor="start">11</text>
<line x1="768.00" y1="510.50" x2="1022.00" y2="510.50" stroke="#d8c810" stroke-width="1.0"/>
<rect x="794.90" y="457.34" width="18.40" height="60.77" fill="none" stroke="#10e010" stroke-width="1.2"/>
<line x1="794.90" y1="489.39" x2="813.30" y2="489.39" stroke="#10e010" stroke-width="1.2"/>
<line x1="804.10" y1="428.93" x2="804.10" y2="457.34" stroke="#10e010" stroke-width="1.2"/>
<line x1="804.10" y1="518.11" x2="804.10" y2="533.36" stroke="#10e010" stroke-width="1.2"/>
<rect x="831.20" y="497.79" width="18.40" height="37.33" fill="none" stroke="#10e010" stroke-width="1.2"/>
<line x1="831.20" y1="520.08" x2="849.60" y2="520.08" stroke="#10e010" stroke-width="1.2"/>
<line x1="840.40" y1="455.58" x2="840.40" y2="497.79" stroke="#10e010" stroke-width="1.2"/>
<line x1="840.40" y1="535.12" x2="840.40" y2="543.52" stroke="#10e010" stroke-width="1.2"/>
<rect x="867.60" y="506.19" width="18.40" height="32.98" fill="none" stroke="#10e010" stroke-width="1.2"/>
<line x1="867.60" y1="527.55" x2="886.00" y2="527.55" stroke="#10e010" stroke-width="1.2"/>
<line x1="876.80" y1="485.55" x2="876.80" y2="506.19" stroke="#10e010" stroke-width="1.2"/>
<line x1="876.80" y1="539.16" x2="876.80" y2="546.53" stroke="#10e010" stroke-width="1.2"/>
<rect x="904.30" y="518.11" width="18.40" height="24.06" fill="none" stroke="#10e010" stroke-width="1.2"/>
<line x1="904.30" y1="532.84" x2="922.70" y2="532.84" stroke="#10e010" stroke-width="1.2"/>
<line x1="913.50" y1="497.27" x2="913.50" y2="518.11" stroke="#10e010" stroke-width="1.2"/>
<line x1="913.50" y1="542.17" x2="913.50" y2="546.53" stroke="#10e010" stroke-width="1.2"/>
<rect x="940.60" y="524.44" width="18.40" height="20.33" fill="none" stroke="#10e010" stroke-width="1.2"/>
<line x1="940.60" y1="537.09" x2="959.00" y2="537.09" stroke="#10e010" stroke-width="1.2"/>
<line x1="949.80" y1="505.88" x2="949.80" y2="524.44" stroke="#10e010" stroke-width="1.2"/>
<line x1="949.80" y1="544.76" x2="949.80" y2="545.49" stroke="#10e010" stroke-width="1.2"/>
<rect x="977.00" y="538.44" width="18.40" height="7.57" fill="none" stroke="#10e010" stroke-width="1.2"/>
<line x1="977.00" y1="543.00" x2="995.40" y2="543.00" stroke="#10e010" stroke-width="1.2"/>
<line x1="986.20" y1="527.03" x2="986.20" y2="538.44" stroke="#10e010" stroke-width="1.2"/>
<line x1="986.20" y1="546.01" x2="986.20" y2="546.01" stroke="#10e010" stroke-width="1.2"/>
<text x="804.1" y="554.19" font-size="5.2" fill="#e6e6e6" text-anchor="middle">EF4+</text>
<text x="840.2" y="554.19" font-size="5.2" fill="#e6e6e6" text-anchor="middle">EF3</text>
<text x="877.0" y="554.19" font-size="5.2" fill="#e6e6e6" text-anchor="middle">EF2</text>
<text x="913.3" y="554.19" font-size="5.2" fill="#e6e6e6" text-anchor="middle">EF1</text>
<text x="949.9" y="554.19" font-size="5.2" fill="#e6e6e6" text-anchor="middle">EF0</text>
<text x="986.2" y="554.19" font-size="5.2" fill="#e6e6e6" text-anchor="middle">NONTOR</text>
<rect x="895.50" y="429.50" width="125.00" height="55.30" fill="#000" stroke="#e0e0e0" stroke-width="1.2"/>
<line x1="895.50" y1="444.20" x2="1020.50" y2="444.20" stroke="#e0e0e0" stroke-width="1.1"/>
<text x="897.5" y="436.24" font-size="6.5" fill="#e6e6e6" text-anchor="start" textLength="85.6" lengthAdjust="spacingAndGlyphs">Prob EF2+ torn with supercell</text>
<text x="897.5" y="443.14" font-size="6.5" fill="#e6e6e6" text-anchor="start" textLength="78.2" lengthAdjust="spacingAndGlyphs">Sample CLIMO = .15 sigtor</text>
<text x="897.5" y="450.74" font-size="6.5" fill="#c8c410" text-anchor="start">based on CAPE:</text>
<text x="1002.2" y="450.74" font-size="6.5" fill="#c8c410" text-anchor="end">0.18</text>
<text x="897.5" y="457.04" font-size="6.5" fill="#c8c410" text-anchor="start">based on LCL:</text>
<text x="1002.2" y="457.04" font-size="6.5" fill="#c8c410" text-anchor="end">0.19</text>
<text x="897.5" y="463.34" font-size="6.5" fill="#e6e6e6" text-anchor="start">based on ESRH:</text>
<text x="1002.2" y="463.34" font-size="6.5" fill="#e6e6e6" text-anchor="end">0.14</text>
<text x="897.5" y="469.64" font-size="6.5" fill="#8a5a10" text-anchor="start">based on EBWD:</text>
<text x="1002.2" y="469.64" font-size="6.5" fill="#8a5a10" text-anchor="end">0.12</text>
<text x="897.5" y="475.94" font-size="6.5" fill="#c8c410" text-anchor="start">based on STPC:</text>
<text x="1002.2" y="475.94" font-size="6.5" fill="#c8c410" text-anchor="end">0.25</text>
<text x="897.5" y="482.24" font-size="6.5" fill="#c8c410" text-anchor="start">based on STP_fixed:</text>
<text x="1002.2" y="482.24" font-size="6.5" fill="#c8c410" text-anchor="end">0.25</text>
</svg></body></html>
